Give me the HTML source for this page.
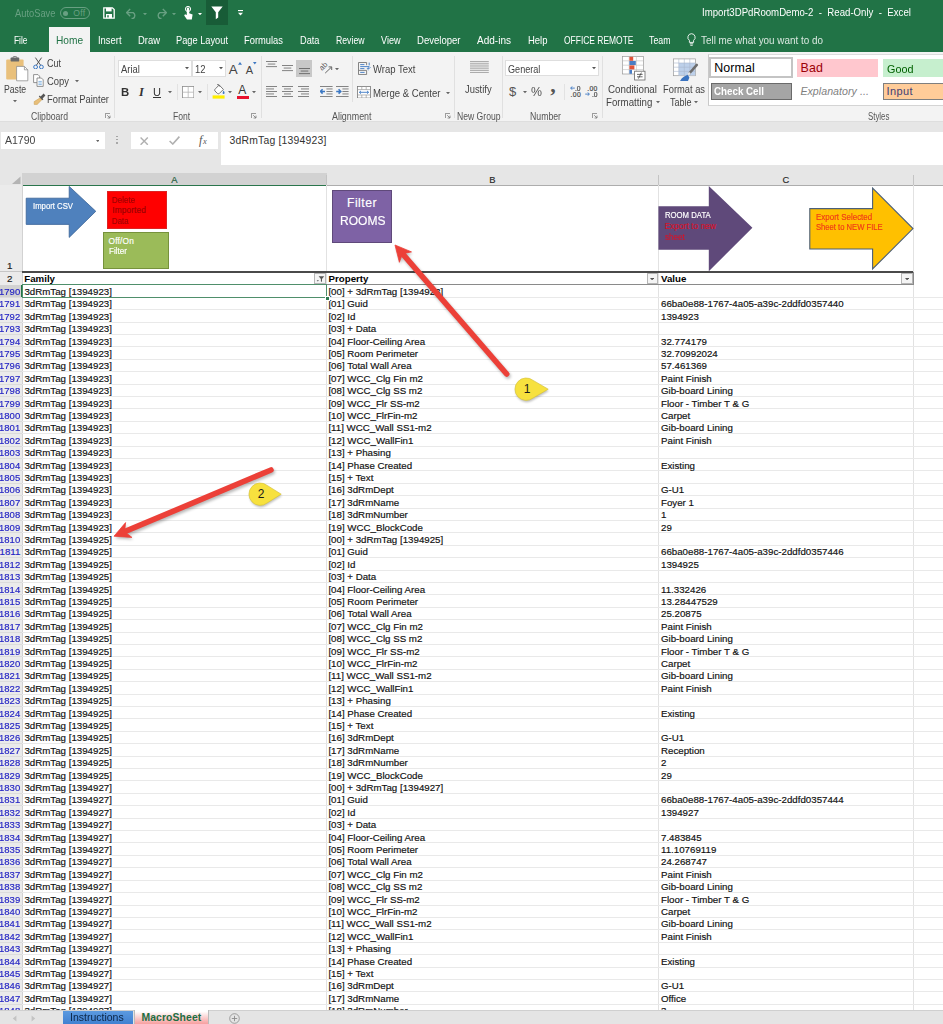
<!DOCTYPE html>
<html><head><meta charset="utf-8"><title>Import3DPdRoomDemo-2 - Read-Only - Excel</title>
<style>
html,body{margin:0;padding:0;}
body{width:943px;height:1024px;overflow:hidden;position:relative;background:#fff;font-family:"Liberation Sans",Arial,sans-serif;}
.t{position:absolute;white-space:pre;display:block;}
.b{position:absolute;display:block;}
.g{-webkit-text-stroke:0.17px currentColor;}
svg text{font-family:"Liberation Sans",Arial,sans-serif;}
</style></head><body>
<div class="b" style="left:0.0px;top:0.0px;width:943.0px;height:52.0px;background:#217346;"></div>
<div class="b" style="left:0.0px;top:52.0px;width:943.0px;height:69.6px;background:#f3f3f3;"></div>
<div class="b" style="left:0.0px;top:121.6px;width:943.0px;height:52.4px;background:#e6e6e6;"></div>
<div class="b" style="left:0.0px;top:121.3px;width:943.0px;height:1.2px;background:#dedede;"></div>
<div class="b" style="left:0.0px;top:174.0px;width:943.0px;height:11.0px;background:#e6e6e6;"></div>
<div class="b" style="left:22.3px;top:173.3px;width:304.3px;height:11.7px;background:#d2d2d2;"></div>
<div class="b" style="left:22.3px;top:184.6px;width:304.3px;height:1.2px;background:#2a754c;"></div>
<div class="b" style="left:326.6px;top:184.8px;width:616.4px;height:0.8px;background:#adadad;"></div>
<div class="b" style="left:326.1px;top:175.0px;width:1.0px;height:10.0px;background:#c4c4c4;"></div>
<div class="b" style="left:658.2px;top:175.0px;width:1.0px;height:10.0px;background:#c4c4c4;"></div>
<div class="b" style="left:912.8px;top:175.0px;width:1.0px;height:10.0px;background:#c4c4c4;"></div>
<span class="t g" style="left:171.2px;top:173.4px;height:13px;line-height:13px;font-size:9.40px;color:#1f5c3a;">A</span>
<span class="t g" style="left:489.3px;top:173.4px;height:13px;line-height:13px;font-size:9.40px;color:#2a2a2a;">B</span>
<span class="t g" style="left:782.6px;top:173.4px;height:13px;line-height:13px;font-size:9.40px;color:#2a2a2a;">C</span>
<svg class="b" style="left:11.0px;top:175.8px;" width="10" height="8.5" viewBox="0 0 10 8.5"><path d="M9.5 0.5V8H1Z" fill="#b4b4b4"/></svg>
<div class="b" style="left:0.0px;top:185.0px;width:22.3px;height:825.2px;background:#ebebeb;"></div>
<div class="b" style="left:21.8px;top:185.0px;width:1.0px;height:825.2px;background:#d2d2d2;"></div>
<div class="b" style="left:326.1px;top:185.4px;width:1.0px;height:824.8px;background:#e2e2e2;"></div>
<div class="b" style="left:658.2px;top:185.4px;width:1.0px;height:824.8px;background:#e2e2e2;"></div>
<div class="b" style="left:912.8px;top:185.4px;width:1.0px;height:824.8px;background:#e2e2e2;"></div>
<span class="t g" style="left:6.9px;top:259.4px;height:14px;line-height:14px;font-size:9.80px;color:#222;">1</span>
<div class="b" style="left:0.0px;top:271.4px;width:22.3px;height:0.8px;background:#c6c6c6;"></div>
<span class="t g" style="left:6.9px;top:271.9px;height:14px;line-height:14px;font-size:9.80px;color:#222;">2</span>
<div class="b" style="left:22.3px;top:271.4px;width:891.0px;height:1.5px;background:#4a4a4a;"></div>
<div class="b" style="left:22.3px;top:284.2px;width:891.0px;height:1.1px;background:#8a8a8a;"></div>
<div class="b" style="left:912.5px;top:272.0px;width:1.2px;height:13.0px;background:#8a8a8a;"></div>
<span class="t " style="left:24.3px;top:271.9px;height:14px;line-height:14px;font-size:9.70px;color:#000;font-weight:bold;">Family</span>
<span class="t " style="left:328.6px;top:271.9px;height:14px;line-height:14px;font-size:9.70px;color:#000;font-weight:bold;">Property</span>
<span class="t " style="left:661.0px;top:271.9px;height:14px;line-height:14px;font-size:9.70px;color:#000;font-weight:bold;">Value</span>
<div class="b" style="left:0.0px;top:284.8px;width:22.3px;height:12.4px;background:#d2d2d2;"></div>
<div class="b" style="left:21.3px;top:284.8px;width:1.5px;height:12.4px;background:#217346;"></div>
<div class="b" style="left:0.0px;top:296.8px;width:22.3px;height:0.8px;background:#dcdcdc;"></div>
<div class="b" style="left:22.3px;top:296.8px;width:920.7px;height:0.8px;background:#e9e9e9;"></div>
<span class="t g" style="left:-0.6px;top:284.9px;height:14px;line-height:14px;font-size:9.72px;color:#2525c4;transform:scaleX(0.9804);transform-origin:0 50%;">1790</span>
<span class="t g" style="left:24.4px;top:284.9px;height:14px;line-height:14px;font-size:9.72px;color:#111;">3dRmTag [1394923]</span>
<span class="t g" style="left:328.4px;top:284.9px;height:14px;line-height:14px;font-size:9.72px;color:#111;">[00] + 3dRmTag [1394923]</span>
<div class="b" style="left:0.0px;top:309.2px;width:22.3px;height:0.8px;background:#dcdcdc;"></div>
<div class="b" style="left:22.3px;top:309.2px;width:920.7px;height:0.8px;background:#e9e9e9;"></div>
<span class="t g" style="left:-0.6px;top:297.3px;height:14px;line-height:14px;font-size:9.72px;color:#2525c4;transform:scaleX(0.9804);transform-origin:0 50%;">1791</span>
<span class="t g" style="left:24.4px;top:297.3px;height:14px;line-height:14px;font-size:9.72px;color:#111;">3dRmTag [1394923]</span>
<span class="t g" style="left:328.4px;top:297.3px;height:14px;line-height:14px;font-size:9.72px;color:#111;">[01] Guid</span>
<span class="t g" style="left:661.0px;top:297.3px;height:14px;line-height:14px;font-size:9.72px;color:#111;">66ba0e88-1767-4a05-a39c-2ddfd0357440</span>
<div class="b" style="left:0.0px;top:321.6px;width:22.3px;height:0.8px;background:#dcdcdc;"></div>
<div class="b" style="left:22.3px;top:321.6px;width:920.7px;height:0.8px;background:#e9e9e9;"></div>
<span class="t g" style="left:-0.6px;top:309.7px;height:14px;line-height:14px;font-size:9.72px;color:#2525c4;transform:scaleX(0.9804);transform-origin:0 50%;">1792</span>
<span class="t g" style="left:24.4px;top:309.7px;height:14px;line-height:14px;font-size:9.72px;color:#111;">3dRmTag [1394923]</span>
<span class="t g" style="left:328.4px;top:309.7px;height:14px;line-height:14px;font-size:9.72px;color:#111;">[02] Id</span>
<span class="t g" style="left:661.0px;top:309.7px;height:14px;line-height:14px;font-size:9.72px;color:#111;">1394923</span>
<div class="b" style="left:0.0px;top:334.0px;width:22.3px;height:0.8px;background:#dcdcdc;"></div>
<div class="b" style="left:22.3px;top:334.0px;width:920.7px;height:0.8px;background:#e9e9e9;"></div>
<span class="t g" style="left:-0.6px;top:322.1px;height:14px;line-height:14px;font-size:9.72px;color:#2525c4;transform:scaleX(0.9804);transform-origin:0 50%;">1793</span>
<span class="t g" style="left:24.4px;top:322.1px;height:14px;line-height:14px;font-size:9.72px;color:#111;">3dRmTag [1394923]</span>
<span class="t g" style="left:328.4px;top:322.1px;height:14px;line-height:14px;font-size:9.72px;color:#111;">[03] + Data</span>
<div class="b" style="left:0.0px;top:346.4px;width:22.3px;height:0.8px;background:#dcdcdc;"></div>
<div class="b" style="left:22.3px;top:346.4px;width:920.7px;height:0.8px;background:#e9e9e9;"></div>
<span class="t g" style="left:-0.6px;top:334.5px;height:14px;line-height:14px;font-size:9.72px;color:#2525c4;transform:scaleX(0.9804);transform-origin:0 50%;">1794</span>
<span class="t g" style="left:24.4px;top:334.5px;height:14px;line-height:14px;font-size:9.72px;color:#111;">3dRmTag [1394923]</span>
<span class="t g" style="left:328.4px;top:334.5px;height:14px;line-height:14px;font-size:9.72px;color:#111;">[04] Floor-Ceiling Area</span>
<span class="t g" style="left:661.0px;top:334.5px;height:14px;line-height:14px;font-size:9.72px;color:#111;">32.774179</span>
<div class="b" style="left:0.0px;top:358.8px;width:22.3px;height:0.8px;background:#dcdcdc;"></div>
<div class="b" style="left:22.3px;top:358.8px;width:920.7px;height:0.8px;background:#e9e9e9;"></div>
<span class="t g" style="left:-0.6px;top:346.9px;height:14px;line-height:14px;font-size:9.72px;color:#2525c4;transform:scaleX(0.9804);transform-origin:0 50%;">1795</span>
<span class="t g" style="left:24.4px;top:346.9px;height:14px;line-height:14px;font-size:9.72px;color:#111;">3dRmTag [1394923]</span>
<span class="t g" style="left:328.4px;top:346.9px;height:14px;line-height:14px;font-size:9.72px;color:#111;">[05] Room Perimeter</span>
<span class="t g" style="left:661.0px;top:346.9px;height:14px;line-height:14px;font-size:9.72px;color:#111;">32.70992024</span>
<div class="b" style="left:0.0px;top:371.2px;width:22.3px;height:0.8px;background:#dcdcdc;"></div>
<div class="b" style="left:22.3px;top:371.2px;width:920.7px;height:0.8px;background:#e9e9e9;"></div>
<span class="t g" style="left:-0.6px;top:359.3px;height:14px;line-height:14px;font-size:9.72px;color:#2525c4;transform:scaleX(0.9804);transform-origin:0 50%;">1796</span>
<span class="t g" style="left:24.4px;top:359.3px;height:14px;line-height:14px;font-size:9.72px;color:#111;">3dRmTag [1394923]</span>
<span class="t g" style="left:328.4px;top:359.3px;height:14px;line-height:14px;font-size:9.72px;color:#111;">[06] Total Wall Area</span>
<span class="t g" style="left:661.0px;top:359.3px;height:14px;line-height:14px;font-size:9.72px;color:#111;">57.461369</span>
<div class="b" style="left:0.0px;top:383.6px;width:22.3px;height:0.8px;background:#dcdcdc;"></div>
<div class="b" style="left:22.3px;top:383.6px;width:920.7px;height:0.8px;background:#e9e9e9;"></div>
<span class="t g" style="left:-0.6px;top:371.7px;height:14px;line-height:14px;font-size:9.72px;color:#2525c4;transform:scaleX(0.9804);transform-origin:0 50%;">1797</span>
<span class="t g" style="left:24.4px;top:371.7px;height:14px;line-height:14px;font-size:9.72px;color:#111;">3dRmTag [1394923]</span>
<span class="t g" style="left:328.4px;top:371.7px;height:14px;line-height:14px;font-size:9.72px;color:#111;">[07] WCC_Clg Fin m2</span>
<span class="t g" style="left:661.0px;top:371.7px;height:14px;line-height:14px;font-size:9.72px;color:#111;">Paint Finish</span>
<div class="b" style="left:0.0px;top:396.0px;width:22.3px;height:0.8px;background:#dcdcdc;"></div>
<div class="b" style="left:22.3px;top:396.0px;width:920.7px;height:0.8px;background:#e9e9e9;"></div>
<span class="t g" style="left:-0.6px;top:384.1px;height:14px;line-height:14px;font-size:9.72px;color:#2525c4;transform:scaleX(0.9804);transform-origin:0 50%;">1798</span>
<span class="t g" style="left:24.4px;top:384.1px;height:14px;line-height:14px;font-size:9.72px;color:#111;">3dRmTag [1394923]</span>
<span class="t g" style="left:328.4px;top:384.1px;height:14px;line-height:14px;font-size:9.72px;color:#111;">[08] WCC_Clg SS m2</span>
<span class="t g" style="left:661.0px;top:384.1px;height:14px;line-height:14px;font-size:9.72px;color:#111;">Gib-board Lining</span>
<div class="b" style="left:0.0px;top:408.4px;width:22.3px;height:0.8px;background:#dcdcdc;"></div>
<div class="b" style="left:22.3px;top:408.4px;width:920.7px;height:0.8px;background:#e9e9e9;"></div>
<span class="t g" style="left:-0.6px;top:396.5px;height:14px;line-height:14px;font-size:9.72px;color:#2525c4;transform:scaleX(0.9804);transform-origin:0 50%;">1799</span>
<span class="t g" style="left:24.4px;top:396.5px;height:14px;line-height:14px;font-size:9.72px;color:#111;">3dRmTag [1394923]</span>
<span class="t g" style="left:328.4px;top:396.5px;height:14px;line-height:14px;font-size:9.72px;color:#111;">[09] WCC_Flr SS-m2</span>
<span class="t g" style="left:661.0px;top:396.5px;height:14px;line-height:14px;font-size:9.72px;color:#111;">Floor - Timber T &amp; G</span>
<div class="b" style="left:0.0px;top:420.8px;width:22.3px;height:0.8px;background:#dcdcdc;"></div>
<div class="b" style="left:22.3px;top:420.8px;width:920.7px;height:0.8px;background:#e9e9e9;"></div>
<span class="t g" style="left:-0.6px;top:408.9px;height:14px;line-height:14px;font-size:9.72px;color:#2525c4;transform:scaleX(0.9804);transform-origin:0 50%;">1800</span>
<span class="t g" style="left:24.4px;top:408.9px;height:14px;line-height:14px;font-size:9.72px;color:#111;">3dRmTag [1394923]</span>
<span class="t g" style="left:328.4px;top:408.9px;height:14px;line-height:14px;font-size:9.72px;color:#111;">[10] WCC_FlrFin-m2</span>
<span class="t g" style="left:661.0px;top:408.9px;height:14px;line-height:14px;font-size:9.72px;color:#111;">Carpet</span>
<div class="b" style="left:0.0px;top:433.2px;width:22.3px;height:0.8px;background:#dcdcdc;"></div>
<div class="b" style="left:22.3px;top:433.2px;width:920.7px;height:0.8px;background:#e9e9e9;"></div>
<span class="t g" style="left:-0.6px;top:421.3px;height:14px;line-height:14px;font-size:9.72px;color:#2525c4;transform:scaleX(0.9804);transform-origin:0 50%;">1801</span>
<span class="t g" style="left:24.4px;top:421.3px;height:14px;line-height:14px;font-size:9.72px;color:#111;">3dRmTag [1394923]</span>
<span class="t g" style="left:328.4px;top:421.3px;height:14px;line-height:14px;font-size:9.72px;color:#111;">[11] WCC_Wall SS1-m2</span>
<span class="t g" style="left:661.0px;top:421.3px;height:14px;line-height:14px;font-size:9.72px;color:#111;">Gib-board Lining</span>
<div class="b" style="left:0.0px;top:445.6px;width:22.3px;height:0.8px;background:#dcdcdc;"></div>
<div class="b" style="left:22.3px;top:445.6px;width:920.7px;height:0.8px;background:#e9e9e9;"></div>
<span class="t g" style="left:-0.6px;top:433.7px;height:14px;line-height:14px;font-size:9.72px;color:#2525c4;transform:scaleX(0.9804);transform-origin:0 50%;">1802</span>
<span class="t g" style="left:24.4px;top:433.7px;height:14px;line-height:14px;font-size:9.72px;color:#111;">3dRmTag [1394923]</span>
<span class="t g" style="left:328.4px;top:433.7px;height:14px;line-height:14px;font-size:9.72px;color:#111;">[12] WCC_WallFin1</span>
<span class="t g" style="left:661.0px;top:433.7px;height:14px;line-height:14px;font-size:9.72px;color:#111;">Paint Finish</span>
<div class="b" style="left:0.0px;top:458.0px;width:22.3px;height:0.8px;background:#dcdcdc;"></div>
<div class="b" style="left:22.3px;top:458.0px;width:920.7px;height:0.8px;background:#e9e9e9;"></div>
<span class="t g" style="left:-0.6px;top:446.1px;height:14px;line-height:14px;font-size:9.72px;color:#2525c4;transform:scaleX(0.9804);transform-origin:0 50%;">1803</span>
<span class="t g" style="left:24.4px;top:446.1px;height:14px;line-height:14px;font-size:9.72px;color:#111;">3dRmTag [1394923]</span>
<span class="t g" style="left:328.4px;top:446.1px;height:14px;line-height:14px;font-size:9.72px;color:#111;">[13] + Phasing</span>
<div class="b" style="left:0.0px;top:470.4px;width:22.3px;height:0.8px;background:#dcdcdc;"></div>
<div class="b" style="left:22.3px;top:470.4px;width:920.7px;height:0.8px;background:#e9e9e9;"></div>
<span class="t g" style="left:-0.6px;top:458.5px;height:14px;line-height:14px;font-size:9.72px;color:#2525c4;transform:scaleX(0.9804);transform-origin:0 50%;">1804</span>
<span class="t g" style="left:24.4px;top:458.5px;height:14px;line-height:14px;font-size:9.72px;color:#111;">3dRmTag [1394923]</span>
<span class="t g" style="left:328.4px;top:458.5px;height:14px;line-height:14px;font-size:9.72px;color:#111;">[14] Phase Created</span>
<span class="t g" style="left:661.0px;top:458.5px;height:14px;line-height:14px;font-size:9.72px;color:#111;">Existing</span>
<div class="b" style="left:0.0px;top:482.8px;width:22.3px;height:0.8px;background:#dcdcdc;"></div>
<div class="b" style="left:22.3px;top:482.8px;width:920.7px;height:0.8px;background:#e9e9e9;"></div>
<span class="t g" style="left:-0.6px;top:470.9px;height:14px;line-height:14px;font-size:9.72px;color:#2525c4;transform:scaleX(0.9804);transform-origin:0 50%;">1805</span>
<span class="t g" style="left:24.4px;top:470.9px;height:14px;line-height:14px;font-size:9.72px;color:#111;">3dRmTag [1394923]</span>
<span class="t g" style="left:328.4px;top:470.9px;height:14px;line-height:14px;font-size:9.72px;color:#111;">[15] + Text</span>
<div class="b" style="left:0.0px;top:495.2px;width:22.3px;height:0.8px;background:#dcdcdc;"></div>
<div class="b" style="left:22.3px;top:495.2px;width:920.7px;height:0.8px;background:#e9e9e9;"></div>
<span class="t g" style="left:-0.6px;top:483.3px;height:14px;line-height:14px;font-size:9.72px;color:#2525c4;transform:scaleX(0.9804);transform-origin:0 50%;">1806</span>
<span class="t g" style="left:24.4px;top:483.3px;height:14px;line-height:14px;font-size:9.72px;color:#111;">3dRmTag [1394923]</span>
<span class="t g" style="left:328.4px;top:483.3px;height:14px;line-height:14px;font-size:9.72px;color:#111;">[16] 3dRmDept</span>
<span class="t g" style="left:661.0px;top:483.3px;height:14px;line-height:14px;font-size:9.72px;color:#111;">G-U1</span>
<div class="b" style="left:0.0px;top:507.6px;width:22.3px;height:0.8px;background:#dcdcdc;"></div>
<div class="b" style="left:22.3px;top:507.6px;width:920.7px;height:0.8px;background:#e9e9e9;"></div>
<span class="t g" style="left:-0.6px;top:495.7px;height:14px;line-height:14px;font-size:9.72px;color:#2525c4;transform:scaleX(0.9804);transform-origin:0 50%;">1807</span>
<span class="t g" style="left:24.4px;top:495.7px;height:14px;line-height:14px;font-size:9.72px;color:#111;">3dRmTag [1394923]</span>
<span class="t g" style="left:328.4px;top:495.7px;height:14px;line-height:14px;font-size:9.72px;color:#111;">[17] 3dRmName</span>
<span class="t g" style="left:661.0px;top:495.7px;height:14px;line-height:14px;font-size:9.72px;color:#111;">Foyer 1</span>
<div class="b" style="left:0.0px;top:520.0px;width:22.3px;height:0.8px;background:#dcdcdc;"></div>
<div class="b" style="left:22.3px;top:520.0px;width:920.7px;height:0.8px;background:#e9e9e9;"></div>
<span class="t g" style="left:-0.6px;top:508.1px;height:14px;line-height:14px;font-size:9.72px;color:#2525c4;transform:scaleX(0.9804);transform-origin:0 50%;">1808</span>
<span class="t g" style="left:24.4px;top:508.1px;height:14px;line-height:14px;font-size:9.72px;color:#111;">3dRmTag [1394923]</span>
<span class="t g" style="left:328.4px;top:508.1px;height:14px;line-height:14px;font-size:9.72px;color:#111;">[18] 3dRmNumber</span>
<span class="t g" style="left:661.0px;top:508.1px;height:14px;line-height:14px;font-size:9.72px;color:#111;">1</span>
<div class="b" style="left:0.0px;top:532.4px;width:22.3px;height:0.8px;background:#dcdcdc;"></div>
<div class="b" style="left:22.3px;top:532.4px;width:920.7px;height:0.8px;background:#e9e9e9;"></div>
<span class="t g" style="left:-0.6px;top:520.5px;height:14px;line-height:14px;font-size:9.72px;color:#2525c4;transform:scaleX(0.9804);transform-origin:0 50%;">1809</span>
<span class="t g" style="left:24.4px;top:520.5px;height:14px;line-height:14px;font-size:9.72px;color:#111;">3dRmTag [1394923]</span>
<span class="t g" style="left:328.4px;top:520.5px;height:14px;line-height:14px;font-size:9.72px;color:#111;">[19] WCC_BlockCode</span>
<span class="t g" style="left:661.0px;top:520.5px;height:14px;line-height:14px;font-size:9.72px;color:#111;">29</span>
<div class="b" style="left:0.0px;top:544.8px;width:22.3px;height:0.8px;background:#dcdcdc;"></div>
<div class="b" style="left:22.3px;top:544.8px;width:920.7px;height:0.8px;background:#e9e9e9;"></div>
<span class="t g" style="left:-0.6px;top:532.9px;height:14px;line-height:14px;font-size:9.72px;color:#2525c4;transform:scaleX(0.9804);transform-origin:0 50%;">1810</span>
<span class="t g" style="left:24.4px;top:532.9px;height:14px;line-height:14px;font-size:9.72px;color:#111;">3dRmTag [1394925]</span>
<span class="t g" style="left:328.4px;top:532.9px;height:14px;line-height:14px;font-size:9.72px;color:#111;">[00] + 3dRmTag [1394925]</span>
<div class="b" style="left:0.0px;top:557.2px;width:22.3px;height:0.8px;background:#dcdcdc;"></div>
<div class="b" style="left:22.3px;top:557.2px;width:920.7px;height:0.8px;background:#e9e9e9;"></div>
<span class="t g" style="left:-0.6px;top:545.3px;height:14px;line-height:14px;font-size:9.72px;color:#2525c4;letter-spacing:0.074px;">1811</span>
<span class="t g" style="left:24.4px;top:545.3px;height:14px;line-height:14px;font-size:9.72px;color:#111;">3dRmTag [1394925]</span>
<span class="t g" style="left:328.4px;top:545.3px;height:14px;line-height:14px;font-size:9.72px;color:#111;">[01] Guid</span>
<span class="t g" style="left:661.0px;top:545.3px;height:14px;line-height:14px;font-size:9.72px;color:#111;">66ba0e88-1767-4a05-a39c-2ddfd0357446</span>
<div class="b" style="left:0.0px;top:569.6px;width:22.3px;height:0.8px;background:#dcdcdc;"></div>
<div class="b" style="left:22.3px;top:569.6px;width:920.7px;height:0.8px;background:#e9e9e9;"></div>
<span class="t g" style="left:-0.6px;top:557.7px;height:14px;line-height:14px;font-size:9.72px;color:#2525c4;transform:scaleX(0.9804);transform-origin:0 50%;">1812</span>
<span class="t g" style="left:24.4px;top:557.7px;height:14px;line-height:14px;font-size:9.72px;color:#111;">3dRmTag [1394925]</span>
<span class="t g" style="left:328.4px;top:557.7px;height:14px;line-height:14px;font-size:9.72px;color:#111;">[02] Id</span>
<span class="t g" style="left:661.0px;top:557.7px;height:14px;line-height:14px;font-size:9.72px;color:#111;">1394925</span>
<div class="b" style="left:0.0px;top:582.0px;width:22.3px;height:0.8px;background:#dcdcdc;"></div>
<div class="b" style="left:22.3px;top:582.0px;width:920.7px;height:0.8px;background:#e9e9e9;"></div>
<span class="t g" style="left:-0.6px;top:570.1px;height:14px;line-height:14px;font-size:9.72px;color:#2525c4;transform:scaleX(0.9804);transform-origin:0 50%;">1813</span>
<span class="t g" style="left:24.4px;top:570.1px;height:14px;line-height:14px;font-size:9.72px;color:#111;">3dRmTag [1394925]</span>
<span class="t g" style="left:328.4px;top:570.1px;height:14px;line-height:14px;font-size:9.72px;color:#111;">[03] + Data</span>
<div class="b" style="left:0.0px;top:594.4px;width:22.3px;height:0.8px;background:#dcdcdc;"></div>
<div class="b" style="left:22.3px;top:594.4px;width:920.7px;height:0.8px;background:#e9e9e9;"></div>
<span class="t g" style="left:-0.6px;top:582.5px;height:14px;line-height:14px;font-size:9.72px;color:#2525c4;transform:scaleX(0.9804);transform-origin:0 50%;">1814</span>
<span class="t g" style="left:24.4px;top:582.5px;height:14px;line-height:14px;font-size:9.72px;color:#111;">3dRmTag [1394925]</span>
<span class="t g" style="left:328.4px;top:582.5px;height:14px;line-height:14px;font-size:9.72px;color:#111;">[04] Floor-Ceiling Area</span>
<span class="t g" style="left:661.0px;top:582.5px;height:14px;line-height:14px;font-size:9.72px;color:#111;">11.332426</span>
<div class="b" style="left:0.0px;top:606.8px;width:22.3px;height:0.8px;background:#dcdcdc;"></div>
<div class="b" style="left:22.3px;top:606.8px;width:920.7px;height:0.8px;background:#e9e9e9;"></div>
<span class="t g" style="left:-0.6px;top:594.9px;height:14px;line-height:14px;font-size:9.72px;color:#2525c4;transform:scaleX(0.9804);transform-origin:0 50%;">1815</span>
<span class="t g" style="left:24.4px;top:594.9px;height:14px;line-height:14px;font-size:9.72px;color:#111;">3dRmTag [1394925]</span>
<span class="t g" style="left:328.4px;top:594.9px;height:14px;line-height:14px;font-size:9.72px;color:#111;">[05] Room Perimeter</span>
<span class="t g" style="left:661.0px;top:594.9px;height:14px;line-height:14px;font-size:9.72px;color:#111;">13.28447529</span>
<div class="b" style="left:0.0px;top:619.2px;width:22.3px;height:0.8px;background:#dcdcdc;"></div>
<div class="b" style="left:22.3px;top:619.2px;width:920.7px;height:0.8px;background:#e9e9e9;"></div>
<span class="t g" style="left:-0.6px;top:607.3px;height:14px;line-height:14px;font-size:9.72px;color:#2525c4;transform:scaleX(0.9804);transform-origin:0 50%;">1816</span>
<span class="t g" style="left:24.4px;top:607.3px;height:14px;line-height:14px;font-size:9.72px;color:#111;">3dRmTag [1394925]</span>
<span class="t g" style="left:328.4px;top:607.3px;height:14px;line-height:14px;font-size:9.72px;color:#111;">[06] Total Wall Area</span>
<span class="t g" style="left:661.0px;top:607.3px;height:14px;line-height:14px;font-size:9.72px;color:#111;">25.20875</span>
<div class="b" style="left:0.0px;top:631.6px;width:22.3px;height:0.8px;background:#dcdcdc;"></div>
<div class="b" style="left:22.3px;top:631.6px;width:920.7px;height:0.8px;background:#e9e9e9;"></div>
<span class="t g" style="left:-0.6px;top:619.7px;height:14px;line-height:14px;font-size:9.72px;color:#2525c4;transform:scaleX(0.9804);transform-origin:0 50%;">1817</span>
<span class="t g" style="left:24.4px;top:619.7px;height:14px;line-height:14px;font-size:9.72px;color:#111;">3dRmTag [1394925]</span>
<span class="t g" style="left:328.4px;top:619.7px;height:14px;line-height:14px;font-size:9.72px;color:#111;">[07] WCC_Clg Fin m2</span>
<span class="t g" style="left:661.0px;top:619.7px;height:14px;line-height:14px;font-size:9.72px;color:#111;">Paint Finish</span>
<div class="b" style="left:0.0px;top:644.0px;width:22.3px;height:0.8px;background:#dcdcdc;"></div>
<div class="b" style="left:22.3px;top:644.0px;width:920.7px;height:0.8px;background:#e9e9e9;"></div>
<span class="t g" style="left:-0.6px;top:632.1px;height:14px;line-height:14px;font-size:9.72px;color:#2525c4;transform:scaleX(0.9804);transform-origin:0 50%;">1818</span>
<span class="t g" style="left:24.4px;top:632.1px;height:14px;line-height:14px;font-size:9.72px;color:#111;">3dRmTag [1394925]</span>
<span class="t g" style="left:328.4px;top:632.1px;height:14px;line-height:14px;font-size:9.72px;color:#111;">[08] WCC_Clg SS m2</span>
<span class="t g" style="left:661.0px;top:632.1px;height:14px;line-height:14px;font-size:9.72px;color:#111;">Gib-board Lining</span>
<div class="b" style="left:0.0px;top:656.4px;width:22.3px;height:0.8px;background:#dcdcdc;"></div>
<div class="b" style="left:22.3px;top:656.4px;width:920.7px;height:0.8px;background:#e9e9e9;"></div>
<span class="t g" style="left:-0.6px;top:644.5px;height:14px;line-height:14px;font-size:9.72px;color:#2525c4;transform:scaleX(0.9804);transform-origin:0 50%;">1819</span>
<span class="t g" style="left:24.4px;top:644.5px;height:14px;line-height:14px;font-size:9.72px;color:#111;">3dRmTag [1394925]</span>
<span class="t g" style="left:328.4px;top:644.5px;height:14px;line-height:14px;font-size:9.72px;color:#111;">[09] WCC_Flr SS-m2</span>
<span class="t g" style="left:661.0px;top:644.5px;height:14px;line-height:14px;font-size:9.72px;color:#111;">Floor - Timber T &amp; G</span>
<div class="b" style="left:0.0px;top:668.8px;width:22.3px;height:0.8px;background:#dcdcdc;"></div>
<div class="b" style="left:22.3px;top:668.8px;width:920.7px;height:0.8px;background:#e9e9e9;"></div>
<span class="t g" style="left:-0.6px;top:656.9px;height:14px;line-height:14px;font-size:9.72px;color:#2525c4;transform:scaleX(0.9804);transform-origin:0 50%;">1820</span>
<span class="t g" style="left:24.4px;top:656.9px;height:14px;line-height:14px;font-size:9.72px;color:#111;">3dRmTag [1394925]</span>
<span class="t g" style="left:328.4px;top:656.9px;height:14px;line-height:14px;font-size:9.72px;color:#111;">[10] WCC_FlrFin-m2</span>
<span class="t g" style="left:661.0px;top:656.9px;height:14px;line-height:14px;font-size:9.72px;color:#111;">Carpet</span>
<div class="b" style="left:0.0px;top:681.2px;width:22.3px;height:0.8px;background:#dcdcdc;"></div>
<div class="b" style="left:22.3px;top:681.2px;width:920.7px;height:0.8px;background:#e9e9e9;"></div>
<span class="t g" style="left:-0.6px;top:669.3px;height:14px;line-height:14px;font-size:9.72px;color:#2525c4;transform:scaleX(0.9804);transform-origin:0 50%;">1821</span>
<span class="t g" style="left:24.4px;top:669.3px;height:14px;line-height:14px;font-size:9.72px;color:#111;">3dRmTag [1394925]</span>
<span class="t g" style="left:328.4px;top:669.3px;height:14px;line-height:14px;font-size:9.72px;color:#111;">[11] WCC_Wall SS1-m2</span>
<span class="t g" style="left:661.0px;top:669.3px;height:14px;line-height:14px;font-size:9.72px;color:#111;">Gib-board Lining</span>
<div class="b" style="left:0.0px;top:693.6px;width:22.3px;height:0.8px;background:#dcdcdc;"></div>
<div class="b" style="left:22.3px;top:693.6px;width:920.7px;height:0.8px;background:#e9e9e9;"></div>
<span class="t g" style="left:-0.6px;top:681.7px;height:14px;line-height:14px;font-size:9.72px;color:#2525c4;transform:scaleX(0.9804);transform-origin:0 50%;">1822</span>
<span class="t g" style="left:24.4px;top:681.7px;height:14px;line-height:14px;font-size:9.72px;color:#111;">3dRmTag [1394925]</span>
<span class="t g" style="left:328.4px;top:681.7px;height:14px;line-height:14px;font-size:9.72px;color:#111;">[12] WCC_WallFin1</span>
<span class="t g" style="left:661.0px;top:681.7px;height:14px;line-height:14px;font-size:9.72px;color:#111;">Paint Finish</span>
<div class="b" style="left:0.0px;top:706.0px;width:22.3px;height:0.8px;background:#dcdcdc;"></div>
<div class="b" style="left:22.3px;top:706.0px;width:920.7px;height:0.8px;background:#e9e9e9;"></div>
<span class="t g" style="left:-0.6px;top:694.1px;height:14px;line-height:14px;font-size:9.72px;color:#2525c4;transform:scaleX(0.9804);transform-origin:0 50%;">1823</span>
<span class="t g" style="left:24.4px;top:694.1px;height:14px;line-height:14px;font-size:9.72px;color:#111;">3dRmTag [1394925]</span>
<span class="t g" style="left:328.4px;top:694.1px;height:14px;line-height:14px;font-size:9.72px;color:#111;">[13] + Phasing</span>
<div class="b" style="left:0.0px;top:718.4px;width:22.3px;height:0.8px;background:#dcdcdc;"></div>
<div class="b" style="left:22.3px;top:718.4px;width:920.7px;height:0.8px;background:#e9e9e9;"></div>
<span class="t g" style="left:-0.6px;top:706.5px;height:14px;line-height:14px;font-size:9.72px;color:#2525c4;transform:scaleX(0.9804);transform-origin:0 50%;">1824</span>
<span class="t g" style="left:24.4px;top:706.5px;height:14px;line-height:14px;font-size:9.72px;color:#111;">3dRmTag [1394925]</span>
<span class="t g" style="left:328.4px;top:706.5px;height:14px;line-height:14px;font-size:9.72px;color:#111;">[14] Phase Created</span>
<span class="t g" style="left:661.0px;top:706.5px;height:14px;line-height:14px;font-size:9.72px;color:#111;">Existing</span>
<div class="b" style="left:0.0px;top:730.8px;width:22.3px;height:0.8px;background:#dcdcdc;"></div>
<div class="b" style="left:22.3px;top:730.8px;width:920.7px;height:0.8px;background:#e9e9e9;"></div>
<span class="t g" style="left:-0.6px;top:718.9px;height:14px;line-height:14px;font-size:9.72px;color:#2525c4;transform:scaleX(0.9804);transform-origin:0 50%;">1825</span>
<span class="t g" style="left:24.4px;top:718.9px;height:14px;line-height:14px;font-size:9.72px;color:#111;">3dRmTag [1394925]</span>
<span class="t g" style="left:328.4px;top:718.9px;height:14px;line-height:14px;font-size:9.72px;color:#111;">[15] + Text</span>
<div class="b" style="left:0.0px;top:743.2px;width:22.3px;height:0.8px;background:#dcdcdc;"></div>
<div class="b" style="left:22.3px;top:743.2px;width:920.7px;height:0.8px;background:#e9e9e9;"></div>
<span class="t g" style="left:-0.6px;top:731.3px;height:14px;line-height:14px;font-size:9.72px;color:#2525c4;transform:scaleX(0.9804);transform-origin:0 50%;">1826</span>
<span class="t g" style="left:24.4px;top:731.3px;height:14px;line-height:14px;font-size:9.72px;color:#111;">3dRmTag [1394925]</span>
<span class="t g" style="left:328.4px;top:731.3px;height:14px;line-height:14px;font-size:9.72px;color:#111;">[16] 3dRmDept</span>
<span class="t g" style="left:661.0px;top:731.3px;height:14px;line-height:14px;font-size:9.72px;color:#111;">G-U1</span>
<div class="b" style="left:0.0px;top:755.6px;width:22.3px;height:0.8px;background:#dcdcdc;"></div>
<div class="b" style="left:22.3px;top:755.6px;width:920.7px;height:0.8px;background:#e9e9e9;"></div>
<span class="t g" style="left:-0.6px;top:743.7px;height:14px;line-height:14px;font-size:9.72px;color:#2525c4;transform:scaleX(0.9804);transform-origin:0 50%;">1827</span>
<span class="t g" style="left:24.4px;top:743.7px;height:14px;line-height:14px;font-size:9.72px;color:#111;">3dRmTag [1394925]</span>
<span class="t g" style="left:328.4px;top:743.7px;height:14px;line-height:14px;font-size:9.72px;color:#111;">[17] 3dRmName</span>
<span class="t g" style="left:661.0px;top:743.7px;height:14px;line-height:14px;font-size:9.72px;color:#111;">Reception</span>
<div class="b" style="left:0.0px;top:768.0px;width:22.3px;height:0.8px;background:#dcdcdc;"></div>
<div class="b" style="left:22.3px;top:768.0px;width:920.7px;height:0.8px;background:#e9e9e9;"></div>
<span class="t g" style="left:-0.6px;top:756.1px;height:14px;line-height:14px;font-size:9.72px;color:#2525c4;transform:scaleX(0.9804);transform-origin:0 50%;">1828</span>
<span class="t g" style="left:24.4px;top:756.1px;height:14px;line-height:14px;font-size:9.72px;color:#111;">3dRmTag [1394925]</span>
<span class="t g" style="left:328.4px;top:756.1px;height:14px;line-height:14px;font-size:9.72px;color:#111;">[18] 3dRmNumber</span>
<span class="t g" style="left:661.0px;top:756.1px;height:14px;line-height:14px;font-size:9.72px;color:#111;">2</span>
<div class="b" style="left:0.0px;top:780.4px;width:22.3px;height:0.8px;background:#dcdcdc;"></div>
<div class="b" style="left:22.3px;top:780.4px;width:920.7px;height:0.8px;background:#e9e9e9;"></div>
<span class="t g" style="left:-0.6px;top:768.5px;height:14px;line-height:14px;font-size:9.72px;color:#2525c4;transform:scaleX(0.9804);transform-origin:0 50%;">1829</span>
<span class="t g" style="left:24.4px;top:768.5px;height:14px;line-height:14px;font-size:9.72px;color:#111;">3dRmTag [1394925]</span>
<span class="t g" style="left:328.4px;top:768.5px;height:14px;line-height:14px;font-size:9.72px;color:#111;">[19] WCC_BlockCode</span>
<span class="t g" style="left:661.0px;top:768.5px;height:14px;line-height:14px;font-size:9.72px;color:#111;">29</span>
<div class="b" style="left:0.0px;top:792.8px;width:22.3px;height:0.8px;background:#dcdcdc;"></div>
<div class="b" style="left:22.3px;top:792.8px;width:920.7px;height:0.8px;background:#e9e9e9;"></div>
<span class="t g" style="left:-0.6px;top:780.9px;height:14px;line-height:14px;font-size:9.72px;color:#2525c4;transform:scaleX(0.9804);transform-origin:0 50%;">1830</span>
<span class="t g" style="left:24.4px;top:780.9px;height:14px;line-height:14px;font-size:9.72px;color:#111;">3dRmTag [1394927]</span>
<span class="t g" style="left:328.4px;top:780.9px;height:14px;line-height:14px;font-size:9.72px;color:#111;">[00] + 3dRmTag [1394927]</span>
<div class="b" style="left:0.0px;top:805.2px;width:22.3px;height:0.8px;background:#dcdcdc;"></div>
<div class="b" style="left:22.3px;top:805.2px;width:920.7px;height:0.8px;background:#e9e9e9;"></div>
<span class="t g" style="left:-0.6px;top:793.3px;height:14px;line-height:14px;font-size:9.72px;color:#2525c4;transform:scaleX(0.9804);transform-origin:0 50%;">1831</span>
<span class="t g" style="left:24.4px;top:793.3px;height:14px;line-height:14px;font-size:9.72px;color:#111;">3dRmTag [1394927]</span>
<span class="t g" style="left:328.4px;top:793.3px;height:14px;line-height:14px;font-size:9.72px;color:#111;">[01] Guid</span>
<span class="t g" style="left:661.0px;top:793.3px;height:14px;line-height:14px;font-size:9.72px;color:#111;">66ba0e88-1767-4a05-a39c-2ddfd0357444</span>
<div class="b" style="left:0.0px;top:817.6px;width:22.3px;height:0.8px;background:#dcdcdc;"></div>
<div class="b" style="left:22.3px;top:817.6px;width:920.7px;height:0.8px;background:#e9e9e9;"></div>
<span class="t g" style="left:-0.6px;top:805.7px;height:14px;line-height:14px;font-size:9.72px;color:#2525c4;transform:scaleX(0.9804);transform-origin:0 50%;">1832</span>
<span class="t g" style="left:24.4px;top:805.7px;height:14px;line-height:14px;font-size:9.72px;color:#111;">3dRmTag [1394927]</span>
<span class="t g" style="left:328.4px;top:805.7px;height:14px;line-height:14px;font-size:9.72px;color:#111;">[02] Id</span>
<span class="t g" style="left:661.0px;top:805.7px;height:14px;line-height:14px;font-size:9.72px;color:#111;">1394927</span>
<div class="b" style="left:0.0px;top:830.0px;width:22.3px;height:0.8px;background:#dcdcdc;"></div>
<div class="b" style="left:22.3px;top:830.0px;width:920.7px;height:0.8px;background:#e9e9e9;"></div>
<span class="t g" style="left:-0.6px;top:818.1px;height:14px;line-height:14px;font-size:9.72px;color:#2525c4;transform:scaleX(0.9804);transform-origin:0 50%;">1833</span>
<span class="t g" style="left:24.4px;top:818.1px;height:14px;line-height:14px;font-size:9.72px;color:#111;">3dRmTag [1394927]</span>
<span class="t g" style="left:328.4px;top:818.1px;height:14px;line-height:14px;font-size:9.72px;color:#111;">[03] + Data</span>
<div class="b" style="left:0.0px;top:842.4px;width:22.3px;height:0.8px;background:#dcdcdc;"></div>
<div class="b" style="left:22.3px;top:842.4px;width:920.7px;height:0.8px;background:#e9e9e9;"></div>
<span class="t g" style="left:-0.6px;top:830.5px;height:14px;line-height:14px;font-size:9.72px;color:#2525c4;transform:scaleX(0.9804);transform-origin:0 50%;">1834</span>
<span class="t g" style="left:24.4px;top:830.5px;height:14px;line-height:14px;font-size:9.72px;color:#111;">3dRmTag [1394927]</span>
<span class="t g" style="left:328.4px;top:830.5px;height:14px;line-height:14px;font-size:9.72px;color:#111;">[04] Floor-Ceiling Area</span>
<span class="t g" style="left:661.0px;top:830.5px;height:14px;line-height:14px;font-size:9.72px;color:#111;">7.483845</span>
<div class="b" style="left:0.0px;top:854.8px;width:22.3px;height:0.8px;background:#dcdcdc;"></div>
<div class="b" style="left:22.3px;top:854.8px;width:920.7px;height:0.8px;background:#e9e9e9;"></div>
<span class="t g" style="left:-0.6px;top:842.9px;height:14px;line-height:14px;font-size:9.72px;color:#2525c4;transform:scaleX(0.9804);transform-origin:0 50%;">1835</span>
<span class="t g" style="left:24.4px;top:842.9px;height:14px;line-height:14px;font-size:9.72px;color:#111;">3dRmTag [1394927]</span>
<span class="t g" style="left:328.4px;top:842.9px;height:14px;line-height:14px;font-size:9.72px;color:#111;">[05] Room Perimeter</span>
<span class="t g" style="left:661.0px;top:842.9px;height:14px;line-height:14px;font-size:9.72px;color:#111;">11.10769119</span>
<div class="b" style="left:0.0px;top:867.2px;width:22.3px;height:0.8px;background:#dcdcdc;"></div>
<div class="b" style="left:22.3px;top:867.2px;width:920.7px;height:0.8px;background:#e9e9e9;"></div>
<span class="t g" style="left:-0.6px;top:855.3px;height:14px;line-height:14px;font-size:9.72px;color:#2525c4;transform:scaleX(0.9804);transform-origin:0 50%;">1836</span>
<span class="t g" style="left:24.4px;top:855.3px;height:14px;line-height:14px;font-size:9.72px;color:#111;">3dRmTag [1394927]</span>
<span class="t g" style="left:328.4px;top:855.3px;height:14px;line-height:14px;font-size:9.72px;color:#111;">[06] Total Wall Area</span>
<span class="t g" style="left:661.0px;top:855.3px;height:14px;line-height:14px;font-size:9.72px;color:#111;">24.268747</span>
<div class="b" style="left:0.0px;top:879.6px;width:22.3px;height:0.8px;background:#dcdcdc;"></div>
<div class="b" style="left:22.3px;top:879.6px;width:920.7px;height:0.8px;background:#e9e9e9;"></div>
<span class="t g" style="left:-0.6px;top:867.7px;height:14px;line-height:14px;font-size:9.72px;color:#2525c4;transform:scaleX(0.9804);transform-origin:0 50%;">1837</span>
<span class="t g" style="left:24.4px;top:867.7px;height:14px;line-height:14px;font-size:9.72px;color:#111;">3dRmTag [1394927]</span>
<span class="t g" style="left:328.4px;top:867.7px;height:14px;line-height:14px;font-size:9.72px;color:#111;">[07] WCC_Clg Fin m2</span>
<span class="t g" style="left:661.0px;top:867.7px;height:14px;line-height:14px;font-size:9.72px;color:#111;">Paint Finish</span>
<div class="b" style="left:0.0px;top:892.0px;width:22.3px;height:0.8px;background:#dcdcdc;"></div>
<div class="b" style="left:22.3px;top:892.0px;width:920.7px;height:0.8px;background:#e9e9e9;"></div>
<span class="t g" style="left:-0.6px;top:880.1px;height:14px;line-height:14px;font-size:9.72px;color:#2525c4;transform:scaleX(0.9804);transform-origin:0 50%;">1838</span>
<span class="t g" style="left:24.4px;top:880.1px;height:14px;line-height:14px;font-size:9.72px;color:#111;">3dRmTag [1394927]</span>
<span class="t g" style="left:328.4px;top:880.1px;height:14px;line-height:14px;font-size:9.72px;color:#111;">[08] WCC_Clg SS m2</span>
<span class="t g" style="left:661.0px;top:880.1px;height:14px;line-height:14px;font-size:9.72px;color:#111;">Gib-board Lining</span>
<div class="b" style="left:0.0px;top:904.5px;width:22.3px;height:0.8px;background:#dcdcdc;"></div>
<div class="b" style="left:22.3px;top:904.5px;width:920.7px;height:0.8px;background:#e9e9e9;"></div>
<span class="t g" style="left:-0.6px;top:892.5px;height:14px;line-height:14px;font-size:9.72px;color:#2525c4;transform:scaleX(0.9804);transform-origin:0 50%;">1839</span>
<span class="t g" style="left:24.4px;top:892.5px;height:14px;line-height:14px;font-size:9.72px;color:#111;">3dRmTag [1394927]</span>
<span class="t g" style="left:328.4px;top:892.5px;height:14px;line-height:14px;font-size:9.72px;color:#111;">[09] WCC_Flr SS-m2</span>
<span class="t g" style="left:661.0px;top:892.5px;height:14px;line-height:14px;font-size:9.72px;color:#111;">Floor - Timber T &amp; G</span>
<div class="b" style="left:0.0px;top:916.9px;width:22.3px;height:0.8px;background:#dcdcdc;"></div>
<div class="b" style="left:22.3px;top:916.9px;width:920.7px;height:0.8px;background:#e9e9e9;"></div>
<span class="t g" style="left:-0.6px;top:905.0px;height:14px;line-height:14px;font-size:9.72px;color:#2525c4;transform:scaleX(0.9804);transform-origin:0 50%;">1840</span>
<span class="t g" style="left:24.4px;top:905.0px;height:14px;line-height:14px;font-size:9.72px;color:#111;">3dRmTag [1394927]</span>
<span class="t g" style="left:328.4px;top:905.0px;height:14px;line-height:14px;font-size:9.72px;color:#111;">[10] WCC_FlrFin-m2</span>
<span class="t g" style="left:661.0px;top:905.0px;height:14px;line-height:14px;font-size:9.72px;color:#111;">Carpet</span>
<div class="b" style="left:0.0px;top:929.3px;width:22.3px;height:0.8px;background:#dcdcdc;"></div>
<div class="b" style="left:22.3px;top:929.3px;width:920.7px;height:0.8px;background:#e9e9e9;"></div>
<span class="t g" style="left:-0.6px;top:917.4px;height:14px;line-height:14px;font-size:9.72px;color:#2525c4;transform:scaleX(0.9804);transform-origin:0 50%;">1841</span>
<span class="t g" style="left:24.4px;top:917.4px;height:14px;line-height:14px;font-size:9.72px;color:#111;">3dRmTag [1394927]</span>
<span class="t g" style="left:328.4px;top:917.4px;height:14px;line-height:14px;font-size:9.72px;color:#111;">[11] WCC_Wall SS1-m2</span>
<span class="t g" style="left:661.0px;top:917.4px;height:14px;line-height:14px;font-size:9.72px;color:#111;">Gib-board Lining</span>
<div class="b" style="left:0.0px;top:941.7px;width:22.3px;height:0.8px;background:#dcdcdc;"></div>
<div class="b" style="left:22.3px;top:941.7px;width:920.7px;height:0.8px;background:#e9e9e9;"></div>
<span class="t g" style="left:-0.6px;top:929.8px;height:14px;line-height:14px;font-size:9.72px;color:#2525c4;transform:scaleX(0.9804);transform-origin:0 50%;">1842</span>
<span class="t g" style="left:24.4px;top:929.8px;height:14px;line-height:14px;font-size:9.72px;color:#111;">3dRmTag [1394927]</span>
<span class="t g" style="left:328.4px;top:929.8px;height:14px;line-height:14px;font-size:9.72px;color:#111;">[12] WCC_WallFin1</span>
<span class="t g" style="left:661.0px;top:929.8px;height:14px;line-height:14px;font-size:9.72px;color:#111;">Paint Finish</span>
<div class="b" style="left:0.0px;top:954.1px;width:22.3px;height:0.8px;background:#dcdcdc;"></div>
<div class="b" style="left:22.3px;top:954.1px;width:920.7px;height:0.8px;background:#e9e9e9;"></div>
<span class="t g" style="left:-0.6px;top:942.2px;height:14px;line-height:14px;font-size:9.72px;color:#2525c4;transform:scaleX(0.9804);transform-origin:0 50%;">1843</span>
<span class="t g" style="left:24.4px;top:942.2px;height:14px;line-height:14px;font-size:9.72px;color:#111;">3dRmTag [1394927]</span>
<span class="t g" style="left:328.4px;top:942.2px;height:14px;line-height:14px;font-size:9.72px;color:#111;">[13] + Phasing</span>
<div class="b" style="left:0.0px;top:966.5px;width:22.3px;height:0.8px;background:#dcdcdc;"></div>
<div class="b" style="left:22.3px;top:966.5px;width:920.7px;height:0.8px;background:#e9e9e9;"></div>
<span class="t g" style="left:-0.6px;top:954.6px;height:14px;line-height:14px;font-size:9.72px;color:#2525c4;transform:scaleX(0.9804);transform-origin:0 50%;">1844</span>
<span class="t g" style="left:24.4px;top:954.6px;height:14px;line-height:14px;font-size:9.72px;color:#111;">3dRmTag [1394927]</span>
<span class="t g" style="left:328.4px;top:954.6px;height:14px;line-height:14px;font-size:9.72px;color:#111;">[14] Phase Created</span>
<span class="t g" style="left:661.0px;top:954.6px;height:14px;line-height:14px;font-size:9.72px;color:#111;">Existing</span>
<div class="b" style="left:0.0px;top:978.9px;width:22.3px;height:0.8px;background:#dcdcdc;"></div>
<div class="b" style="left:22.3px;top:978.9px;width:920.7px;height:0.8px;background:#e9e9e9;"></div>
<span class="t g" style="left:-0.6px;top:967.0px;height:14px;line-height:14px;font-size:9.72px;color:#2525c4;transform:scaleX(0.9804);transform-origin:0 50%;">1845</span>
<span class="t g" style="left:24.4px;top:967.0px;height:14px;line-height:14px;font-size:9.72px;color:#111;">3dRmTag [1394927]</span>
<span class="t g" style="left:328.4px;top:967.0px;height:14px;line-height:14px;font-size:9.72px;color:#111;">[15] + Text</span>
<div class="b" style="left:0.0px;top:991.3px;width:22.3px;height:0.8px;background:#dcdcdc;"></div>
<div class="b" style="left:22.3px;top:991.3px;width:920.7px;height:0.8px;background:#e9e9e9;"></div>
<span class="t g" style="left:-0.6px;top:979.4px;height:14px;line-height:14px;font-size:9.72px;color:#2525c4;transform:scaleX(0.9804);transform-origin:0 50%;">1846</span>
<span class="t g" style="left:24.4px;top:979.4px;height:14px;line-height:14px;font-size:9.72px;color:#111;">3dRmTag [1394927]</span>
<span class="t g" style="left:328.4px;top:979.4px;height:14px;line-height:14px;font-size:9.72px;color:#111;">[16] 3dRmDept</span>
<span class="t g" style="left:661.0px;top:979.4px;height:14px;line-height:14px;font-size:9.72px;color:#111;">G-U1</span>
<div class="b" style="left:0.0px;top:1003.7px;width:22.3px;height:0.8px;background:#dcdcdc;"></div>
<div class="b" style="left:22.3px;top:1003.7px;width:920.7px;height:0.8px;background:#e9e9e9;"></div>
<span class="t g" style="left:-0.6px;top:991.8px;height:14px;line-height:14px;font-size:9.72px;color:#2525c4;transform:scaleX(0.9804);transform-origin:0 50%;">1847</span>
<span class="t g" style="left:24.4px;top:991.8px;height:14px;line-height:14px;font-size:9.72px;color:#111;">3dRmTag [1394927]</span>
<span class="t g" style="left:328.4px;top:991.8px;height:14px;line-height:14px;font-size:9.72px;color:#111;">[17] 3dRmName</span>
<span class="t g" style="left:661.0px;top:991.8px;height:14px;line-height:14px;font-size:9.72px;color:#111;">Office</span>
<span class="t g" style="left:-0.6px;top:1004.2px;height:14px;line-height:14px;font-size:9.72px;color:#2525c4;transform:scaleX(0.9804);transform-origin:0 50%;">1848</span>
<span class="t g" style="left:24.4px;top:1004.2px;height:14px;line-height:14px;font-size:9.72px;color:#111;">3dRmTag [1394927]</span>
<span class="t g" style="left:328.4px;top:1004.2px;height:14px;line-height:14px;font-size:9.72px;color:#111;">[18] 3dRmNumber</span>
<span class="t g" style="left:661.0px;top:1004.2px;height:14px;line-height:14px;font-size:9.72px;color:#111;">3</span>
<div class="b" style="left:22.0px;top:284.4px;width:305.1px;height:13.4px;border:1.2px solid #4f8f6b;box-sizing:border-box"></div>
<div class="b" style="left:324.7px;top:295.7px;width:3.1px;height:3.0px;background:#2f7a50;border:0.6px solid #fff"></div>
<div class="b" style="left:0.0px;top:1010.2px;width:943.0px;height:13.8px;background:#e6e6e6;"></div>
<svg class="b" style="left:20.0px;top:180.0px;" width="90" height="65" viewBox="20 180 90 65"><path d="M26.2 198.2H69.2V186.4L95.8 211.3L69.2 237.4V224.4H26.2Z" fill="#4f81bd" stroke="#3a6397" stroke-width="0.8"/></svg>
<span class="t g" style="left:32.5px;top:200.3px;height:12px;line-height:12px;font-size:8.30px;color:#fff;transform:scaleX(0.9325);transform-origin:0 50%;">Import CSV</span>
<div class="b" style="left:107.0px;top:191.3px;width:59.6px;height:38.0px;background:#ff0000;border:0.6px solid #d22;box-sizing:border-box"></div>
<span class="t g" style="left:112.3px;top:193.7px;height:12px;line-height:12px;font-size:8.30px;color:#9c0000;transform:scaleX(0.9670);transform-origin:0 50%;">Delete</span>
<span class="t g" style="left:112.3px;top:204.4px;height:12px;line-height:12px;font-size:8.30px;color:#9c0000;letter-spacing:0.118px;">Imported</span>
<span class="t g" style="left:112.3px;top:215.0px;height:12px;line-height:12px;font-size:8.30px;color:#9c0000;transform:scaleX(0.9525);transform-origin:0 50%;">Data</span>
<div class="b" style="left:103.0px;top:232.2px;width:65.8px;height:37.1px;background:#9bbb59;border:0.8px solid #76923c;box-sizing:border-box"></div>
<span class="t g" style="left:108.6px;top:234.6px;height:12px;line-height:12px;font-size:8.30px;color:#fff;letter-spacing:0.184px;">Off/On</span>
<span class="t g" style="left:108.6px;top:245.4px;height:12px;line-height:12px;font-size:8.30px;color:#fff;transform:scaleX(0.9705);transform-origin:0 50%;">Filter</span>
<div class="b" style="left:332.2px;top:190.4px;width:60.3px;height:52.8px;background:#7e62a5;border:0.8px solid #5f497a;box-sizing:border-box"></div>
<span class="t g" style="left:347.0px;top:195.3px;height:17px;line-height:17px;font-size:12.20px;color:#fff;letter-spacing:0.481px;">Filter</span>
<span class="t g" style="left:339.5px;top:212.8px;height:17px;line-height:17px;font-size:12.20px;color:#fff;transform:scaleX(0.9872);transform-origin:0 50%;">ROOMS</span>
<svg class="b" style="left:655.0px;top:183.0px;" width="100" height="90" viewBox="655 183 100 90"><path d="M658.4 206.2H708.8V185.9L752.4 227.8L708.8 271.2V249.7H658.4Z" fill="#5f497a"/></svg>
<span class="t g" style="left:664.8px;top:209.4px;height:12px;line-height:12px;font-size:8.30px;color:#fff;transform:scaleX(0.9321);transform-origin:0 50%;">ROOM DATA</span>
<span class="t g" style="left:664.8px;top:220.2px;height:12px;line-height:12px;font-size:8.30px;color:#d4142a;letter-spacing:0.035px;">Export to new</span>
<span class="t g" style="left:664.8px;top:230.6px;height:12px;line-height:12px;font-size:8.30px;color:#d4142a;transform:scaleX(0.9702);transform-origin:0 50%;">sheet</span>
<svg class="b" style="left:805.0px;top:183.0px;" width="112" height="90" viewBox="805 183 112 90"><path d="M809.8 208.6H872.6V188.2L913 228.6L872.6 269V249H809.8Z" fill="#ffc000" stroke="#4b5f78" stroke-width="1.1" stroke-linejoin="miter"/></svg>
<span class="t g" style="left:815.8px;top:210.6px;height:12px;line-height:12px;font-size:8.30px;color:#f03a17;transform:scaleX(0.9591);transform-origin:0 50%;">Export Selected</span>
<span class="t g" style="left:815.8px;top:221.2px;height:12px;line-height:12px;font-size:8.30px;color:#f03a17;transform:scaleX(0.9210);transform-origin:0 50%;">Sheet to NEW FILE</span>
<div class="b" style="left:314.4px;top:273.0px;width:11.6px;height:11.2px;background:#f4f4f4;border:0.7px solid #b5b5b5;box-sizing:border-box"></div>
<svg class="b" style="left:316.4px;top:275.0px;" width="9" height="8" viewBox="0 0 9 8"><path d="M2.6 1.2H8.2L6 4V7L4.9 6.2V4Z" fill="#555"/><path d="M0.6 5.2H3L1.8 6.6Z" fill="#555"/></svg>
<div class="b" style="left:646.5px;top:273.0px;width:11.6px;height:11.2px;background:#f4f4f4;border:0.7px solid #b5b5b5;box-sizing:border-box"></div>
<svg class="b" style="left:650.2px;top:277.8px;" width="4.2" height="2.6" viewBox="0 0 4.2 2.6"><path d="M0 0H4.2 L2.1 2.4 Z" fill="#555"/></svg>
<div class="b" style="left:901.1px;top:273.0px;width:11.6px;height:11.2px;background:#f4f4f4;border:0.7px solid #b5b5b5;box-sizing:border-box"></div>
<svg class="b" style="left:904.8px;top:277.8px;" width="4.2" height="2.6" viewBox="0 0 4.2 2.6"><path d="M0 0H4.2 L2.1 2.4 Z" fill="#555"/></svg>
<svg class="b" style="left:382.6px;top:232.8px;" width="135.7" height="153" viewBox="382.6 232.8 135.7 153.0"><defs><filter id="sh506" x="-20%" y="-20%" width="140%" height="140%"><feGaussianBlur stdDeviation="1.6"/></filter></defs><g transform="translate(1.2,2)" opacity="0.28" filter="url(#sh506)"><line x1="506.3" y1="373.8" x2="402.1" y2="253.5" stroke="#000" stroke-width="5.6" stroke-linecap="round"/><path d="M394.6 244.8 L411.1 251.7 L402.1 253.5 L399.0 262.1Z" fill="#000"/></g><line x1="506.3" y1="373.8" x2="402.1" y2="253.5" stroke="#ec4038" stroke-width="5.6" stroke-linecap="round"/><path d="M394.6 244.8 L411.1 251.7 L402.1 253.5 L399.0 262.1Z" fill="#ec4038" stroke="#ec4038" stroke-width="0.8" stroke-linejoin="round"/></svg>
<svg class="b" style="left:101.5px;top:457.5px;" width="181" height="90.2" viewBox="101.5 457.5 181.0 90.2"><defs><filter id="sh270" x="-20%" y="-20%" width="140%" height="140%"><feGaussianBlur stdDeviation="1.6"/></filter></defs><g transform="translate(1.2,2)" opacity="0.28" filter="url(#sh270)"><line x1="270.5" y1="469.5" x2="124.1" y2="531.2" stroke="#000" stroke-width="5.6" stroke-linecap="round"/><path d="M113.5 535.7 L125.1 522.1 L124.1 531.2 L131.4 536.9Z" fill="#000"/></g><line x1="270.5" y1="469.5" x2="124.1" y2="531.2" stroke="#ec4038" stroke-width="5.6" stroke-linecap="round"/><path d="M113.5 535.7 L125.1 522.1 L124.1 531.2 L131.4 536.9Z" fill="#ec4038" stroke="#ec4038" stroke-width="0.8" stroke-linejoin="round"/></svg>
<svg class="b" style="left:508.8px;top:371.8px;" width="47.2" height="36.4" viewBox="508.8 371.8 47.2 36.4"><defs><filter id="bs1" x="-20%" y="-20%" width="140%" height="150%"><feGaussianBlur stdDeviation="1.3"/></filter></defs><path d="M532.9 397.8 A11.2 11.2 0 1 1 532.9 380.2 L548.0 389.0 Z" fill="#000" opacity="0.25" transform="translate(0.6,1.8)" filter="url(#bs1)"/><path d="M532.9 397.8 A11.2 11.2 0 1 1 532.9 380.2 L548.0 389.0 Z" fill="#f7e13e" stroke="#d9c43a" stroke-width="0.7"/><text x="526.8" y="393.2" font-size="12" text-anchor="middle" fill="#1a1a1a">1</text></svg>
<svg class="b" style="left:243.3px;top:477.3px;" width="46.2" height="36.4" viewBox="243.3 477.3 46.2 36.4"><defs><filter id="bs2" x="-20%" y="-20%" width="140%" height="150%"><feGaussianBlur stdDeviation="1.3"/></filter></defs><path d="M267.4 503.3 A11.2 11.2 0 1 1 267.4 485.7 L281.5 494.5 Z" fill="#000" opacity="0.25" transform="translate(0.6,1.8)" filter="url(#bs2)"/><path d="M267.4 503.3 A11.2 11.2 0 1 1 267.4 485.7 L281.5 494.5 Z" fill="#f7e13e" stroke="#d9c43a" stroke-width="0.7"/><text x="261.3" y="498.7" font-size="12" text-anchor="middle" fill="#1a1a1a">2</text></svg>
<span class="t " style="left:15.0px;top:5.7px;height:15px;line-height:15px;font-size:10.60px;color:#68a082;transform:scaleX(0.8811);transform-origin:0 50%;">AutoSave</span>
<div class="b" style="left:59.5px;top:7.3px;width:30.5px;height:11.6px;border:1px solid #68a082;border-radius:7px;box-sizing:border-box"></div>
<div class="b" style="left:63.0px;top:10.6px;width:5.0px;height:5.0px;background:#68a082;border-radius:50%"></div>
<span class="t " style="left:73.2px;top:7.2px;height:12px;line-height:12px;font-size:8.60px;color:#68a082;letter-spacing:0.329px;">Off</span>
<svg class="b" style="left:103.0px;top:7.0px;" width="12" height="12" viewBox="0 0 12 12"><path d="M0.8 0.8H9.4L11.2 2.6V11.2H0.8Z" fill="none" stroke="#fff" stroke-width="1.3"/><rect x="3" y="0.8" width="5.6" height="3.6" fill="#fff"/><rect x="3" y="7" width="6" height="4.2" fill="#fff"/><rect x="4.3" y="8.2" width="1.4" height="2.2" fill="#217346"/></svg>
<svg class="b" style="left:125.5px;top:7.5px;" width="12" height="11" viewBox="0 0 12 11"><path d="M1 4.6H7.2A3.4 3.4 0 0 1 7.2 10.4H5.5" fill="none" stroke="#68a082" stroke-width="1.4"/><path d="M4.2 1L0.6 4.6L4.2 8.2" fill="none" stroke="#68a082" stroke-width="1.4"/></svg>
<svg class="b" style="left:143.0px;top:12.8px;" width="4" height="2.5" viewBox="0 0 4 2.5"><path d="M0 0H4 L2 2.3 Z" fill="#68a082"/></svg>
<svg class="b" style="left:154.5px;top:7.5px;" width="12" height="11" viewBox="0 0 12 11"><path d="M11 4.6H4.8A3.4 3.4 0 0 0 4.8 10.4H6.5" fill="none" stroke="#68a082" stroke-width="1.4"/><path d="M7.8 1L11.4 4.6L7.8 8.2" fill="none" stroke="#68a082" stroke-width="1.4"/></svg>
<svg class="b" style="left:172.0px;top:12.8px;" width="4" height="2.5" viewBox="0 0 4 2.5"><path d="M0 0H4 L2 2.3 Z" fill="#68a082"/></svg>
<svg class="b" style="left:182.0px;top:5.5px;" width="12" height="15" viewBox="0 0 12 15"><circle cx="6" cy="3" r="2.6" fill="none" stroke="#fff" stroke-width="1"/><path d="M4.8 2.6V9L3 8.2L2.2 9.4L5 13.6H9.8L10.6 8.6L7.2 7.2V2.6A1.2 1.2 0 0 0 4.8 2.6Z" fill="#fff"/></svg>
<svg class="b" style="left:198.3px;top:12.8px;" width="4" height="2.5" viewBox="0 0 4 2.5"><path d="M0 0H4 L2 2.3 Z" fill="#fff"/></svg>
<div class="b" style="left:205.5px;top:0.0px;width:22.7px;height:25.4px;background:#185c37;"></div>
<svg class="b" style="left:210.5px;top:6.3px;" width="12" height="13.5" viewBox="0 0 12 13.5"><path d="M0.3 0.6H11.7L7.2 6.2V11.4L4.8 13.2V6.2Z" fill="#fff"/></svg>
<svg class="b" style="left:237.6px;top:10.2px;" width="5" height="7" viewBox="0 0 5 7"><rect x="0" y="0" width="5" height="1.1" fill="#fff"/><path d="M0 2.8H5L2.5 5.6Z" fill="#fff"/></svg>
<span class="t " style="left:702.0px;top:5.2px;height:15px;line-height:15px;font-size:10.80px;color:#fff;transform:scaleX(0.8929);transform-origin:0 50%;">Import3DPdRoomDemo-2  -  Read-Only  -  Excel</span>
<div class="b" style="left:48.5px;top:27.0px;width:41.5px;height:25.5px;background:#f3f3f3;"></div>
<span class="t " style="left:14.0px;top:33.0px;height:15px;line-height:15px;font-size:10.80px;color:#fff;transform:scaleX(0.7757);transform-origin:0 50%;">File</span>
<span class="t " style="left:55.5px;top:33.0px;height:15px;line-height:15px;font-size:10.80px;color:#217346;transform:scaleX(0.9407);transform-origin:0 50%;">Home</span>
<span class="t " style="left:98.0px;top:33.0px;height:15px;line-height:15px;font-size:10.80px;color:#fff;transform:scaleX(0.8737);transform-origin:0 50%;">Insert</span>
<span class="t " style="left:138.0px;top:33.0px;height:15px;line-height:15px;font-size:10.80px;color:#fff;transform:scaleX(0.8729);transform-origin:0 50%;">Draw</span>
<span class="t " style="left:176.0px;top:33.0px;height:15px;line-height:15px;font-size:10.80px;color:#fff;transform:scaleX(0.8574);transform-origin:0 50%;">Page Layout</span>
<span class="t " style="left:244.0px;top:33.0px;height:15px;line-height:15px;font-size:10.80px;color:#fff;transform:scaleX(0.8665);transform-origin:0 50%;">Formulas</span>
<span class="t " style="left:299.5px;top:33.0px;height:15px;line-height:15px;font-size:10.80px;color:#fff;transform:scaleX(0.8548);transform-origin:0 50%;">Data</span>
<span class="t " style="left:335.5px;top:33.0px;height:15px;line-height:15px;font-size:10.80px;color:#fff;transform:scaleX(0.8048);transform-origin:0 50%;">Review</span>
<span class="t " style="left:380.5px;top:33.0px;height:15px;line-height:15px;font-size:10.80px;color:#fff;transform:scaleX(0.8400);transform-origin:0 50%;">View</span>
<span class="t " style="left:417.0px;top:33.0px;height:15px;line-height:15px;font-size:10.80px;color:#fff;transform:scaleX(0.8836);transform-origin:0 50%;">Developer</span>
<span class="t " style="left:477.0px;top:33.0px;height:15px;line-height:15px;font-size:10.80px;color:#fff;transform:scaleX(0.9284);transform-origin:0 50%;">Add-ins</span>
<span class="t " style="left:527.5px;top:33.0px;height:15px;line-height:15px;font-size:10.80px;color:#fff;transform:scaleX(0.8779);transform-origin:0 50%;">Help</span>
<span class="t " style="left:563.5px;top:33.0px;height:15px;line-height:15px;font-size:10.40px;color:#fff;transform:scaleX(0.8127);transform-origin:0 50%;">OFFICE REMOTE</span>
<span class="t " style="left:649.0px;top:33.0px;height:15px;line-height:15px;font-size:10.80px;color:#fff;transform:scaleX(0.8141);transform-origin:0 50%;">Team</span>
<span class="t " style="left:701.0px;top:33.0px;height:15px;line-height:15px;font-size:10.80px;color:#dbe9e1;transform:scaleX(0.9154);transform-origin:0 50%;">Tell me what you want to do</span>
<svg class="b" style="left:687.0px;top:33.2px;" width="9" height="14" viewBox="0 0 9 14"><path d="M4.5 0.7A3.7 3.7 0 0 1 6.6 7.4V9.4H2.4V7.4A3.7 3.7 0 0 1 4.5 0.7Z" fill="none" stroke="#fff" stroke-width="0.9"/><path d="M2.8 10.8H6.2M3.3 12.3H5.7" stroke="#fff" stroke-width="0.9"/></svg>
<svg class="b" style="left:5.0px;top:55.6px;" width="24" height="26" viewBox="0 0 24 26"><rect x="1.2" y="3.6" width="17.4" height="20" rx="1" fill="#e9c07b"/><rect x="5.6" y="1.6" width="8.6" height="3.8" rx="0.6" fill="#6a6a6a"/><rect x="8" y="0.5" width="3.8" height="2.4" rx="1" fill="none" stroke="#6a6a6a" stroke-width="0.8"/><path d="M11.6 10.4H19.4L22.8 13.8V24.8H11.6Z" fill="#fff" stroke="#8f8f8f" stroke-width="0.8"/><path d="M19.4 10.4V13.8H22.8" fill="none" stroke="#8f8f8f" stroke-width="0.8"/></svg>
<span class="t " style="left:4.0px;top:82.3px;height:15px;line-height:15px;font-size:10.80px;color:#444;transform:scaleX(0.8038);transform-origin:0 50%;">Paste</span>
<svg class="b" style="left:13.2px;top:100.4px;" width="4" height="2.5" viewBox="0 0 4 2.5"><path d="M0 0H4 L2 2.3 Z" fill="#666"/></svg>
<svg class="b" style="left:32.5px;top:56.5px;" width="11" height="12.5" viewBox="0 0 11 12.5"><path d="M2.4 0.6L7.6 8.2M8.6 0.6L3.4 8.2" stroke="#555" stroke-width="1"/><circle cx="2.6" cy="10" r="1.9" fill="none" stroke="#3c78c3" stroke-width="1"/><circle cx="8.4" cy="10" r="1.9" fill="none" stroke="#3c78c3" stroke-width="1"/></svg>
<span class="t " style="left:47.0px;top:55.8px;height:15px;line-height:15px;font-size:10.80px;color:#444;transform:scaleX(0.8330);transform-origin:0 50%;">Cut</span>
<svg class="b" style="left:32.8px;top:73.8px;" width="11" height="13" viewBox="0 0 11 13"><path d="M0.6 0.6H5L6.6 2.2V8.6H0.6Z" fill="#fff" stroke="#777" stroke-width="0.8"/><path d="M4 4H8.4L10.2 5.8V12.4H4Z" fill="#fff" stroke="#777" stroke-width="0.8"/><path d="M5.4 7.4H8.8M5.4 9H8.8M5.4 10.6H8.8" stroke="#5b9bd5" stroke-width="0.7"/></svg>
<span class="t " style="left:47.0px;top:73.6px;height:15px;line-height:15px;font-size:10.80px;color:#444;transform:scaleX(0.8726);transform-origin:0 50%;">Copy</span>
<svg class="b" style="left:75.4px;top:80.0px;" width="4" height="2.5" viewBox="0 0 4 2.5"><path d="M0 0H4 L2 2.3 Z" fill="#666"/></svg>
<svg class="b" style="left:32.5px;top:92.5px;" width="13" height="12" viewBox="0 0 13 12"><path d="M7.2 4.8L9 6.6L4.2 11.4H1.2V8.6Z" fill="#e8bf7a" stroke="#c79a4c" stroke-width="0.5"/><path d="M7.6 3.4L10.6 0.6L12.4 2.4L9.6 5.4L10.4 6.2L9.4 7.2L5.8 3.6L6.8 2.6Z" fill="#555"/></svg>
<span class="t " style="left:47.0px;top:91.6px;height:15px;line-height:15px;font-size:10.80px;color:#444;transform:scaleX(0.8680);transform-origin:0 50%;">Format Painter</span>
<span class="t " style="left:31.0px;top:109.9px;height:14px;line-height:14px;font-size:10.00px;color:#555;transform:scaleX(0.8644);transform-origin:0 50%;">Clipboard</span>
<svg class="b" style="left:105.0px;top:113.2px;" width="6" height="6" viewBox="0 0 6 6"><path d="M0.4 5V0.4H5" fill="none" stroke="#777" stroke-width="0.8"/><path d="M2.2 2.2L5 5M5 2.6V5H2.6" fill="none" stroke="#777" stroke-width="0.8"/></svg>
<div class="b" style="left:114.1px;top:56.0px;width:0.8px;height:62.0px;background:#e0e0e0;"></div>
<div class="b" style="left:118.0px;top:60.0px;width:73.5px;height:16.6px;background:#fff;border:0.7px solid #dedede;box-sizing:border-box"></div>
<div class="b" style="left:192.0px;top:60.0px;width:34.0px;height:16.6px;background:#fff;border:0.7px solid #dedede;box-sizing:border-box"></div>
<span class="t " style="left:120.6px;top:61.6px;height:15px;line-height:15px;font-size:10.80px;color:#444;transform:scaleX(0.8747);transform-origin:0 50%;">Arial</span>
<svg class="b" style="left:184.6px;top:67.4px;" width="4" height="2.5" viewBox="0 0 4 2.5"><path d="M0 0H4 L2 2.3 Z" fill="#555"/></svg>
<span class="t " style="left:195.0px;top:61.6px;height:15px;line-height:15px;font-size:10.80px;color:#444;transform:scaleX(0.8740);transform-origin:0 50%;">12</span>
<svg class="b" style="left:219.0px;top:67.4px;" width="4" height="2.5" viewBox="0 0 4 2.5"><path d="M0 0H4 L2 2.3 Z" fill="#555"/></svg>
<span class="t " style="left:228.8px;top:60.0px;height:19px;line-height:19px;font-size:13.40px;color:#444;letter-spacing:0.662px;">A</span>
<svg class="b" style="left:238.3px;top:62.0px;" width="4" height="3" viewBox="0 0 4 3"><path d="M0 2.8L2 0L4 2.8Z" fill="#3c78c3"/></svg>
<span class="t " style="left:245.8px;top:62.6px;height:15px;line-height:15px;font-size:11.00px;color:#444;letter-spacing:0.263px;">A</span>
<svg class="b" style="left:253.2px;top:62.4px;" width="3.6" height="2.6" viewBox="0 0 3.6 2.6"><path d="M0 0H3.6L1.8 2.6Z" fill="#3c78c3"/></svg>
<span class="t " style="left:121.2px;top:84.1px;height:16px;line-height:16px;font-size:11.60px;color:#333;transform:scaleX(0.9788);transform-origin:0 50%;font-weight:bold;">B</span>
<span class="t " style="left:139.0px;top:84.1px;height:16px;line-height:16px;font-size:11.60px;color:#333;font-weight:bold;font-style:italic;font-family:'Liberation Serif',serif;font-size:12.4px;">I</span>
<span class="t " style="left:153.3px;top:83.7px;height:16px;line-height:16px;font-size:11.40px;color:#333;transform:scaleX(0.9717);transform-origin:0 50%;">U</span>
<div class="b" style="left:153.2px;top:97.2px;width:8.1px;height:1.0px;background:#333;"></div>
<svg class="b" style="left:168.2px;top:91.2px;" width="4" height="2.5" viewBox="0 0 4 2.5"><path d="M0 0H4 L2 2.3 Z" fill="#666"/></svg>
<div class="b" style="left:176.5px;top:84.0px;width:0.7px;height:16.0px;background:#e2e2e2;"></div>
<svg class="b" style="left:181.6px;top:85.6px;" width="12.4" height="12.4" viewBox="0 0 12.4 12.4"><rect x="0.5" y="0.5" width="11.4" height="11.4" fill="#fff" stroke="#8c8c8c" stroke-width="0.8"/><path d="M6.2 0.5V11.9M0.5 6.2H11.9" stroke="#b5b5b5" stroke-width="0.8"/></svg>
<svg class="b" style="left:198.2px;top:91.2px;" width="4" height="2.5" viewBox="0 0 4 2.5"><path d="M0 0H4 L2 2.3 Z" fill="#666"/></svg>
<div class="b" style="left:206.6px;top:84.0px;width:0.7px;height:16.0px;background:#e2e2e2;"></div>
<svg class="b" style="left:211.5px;top:83.8px;" width="13.5" height="15" viewBox="0 0 13.5 15"><path d="M3.6 4.6L7.2 1L11.4 5.4L7.4 9.4Q6.4 10.2 5.4 9.4L2.8 6.8Q2.2 5.8 3.6 4.6Z" fill="#fff" stroke="#666" stroke-width="0.9"/><path d="M5 0.6Q7.4 -0.4 7.6 2.6" fill="none" stroke="#666" stroke-width="0.8"/><path d="M11.6 6.4Q13.2 8.8 12.2 9.8Q11 10.4 10.6 9.2Q10.6 8 11.6 6.4Z" fill="#3c78c3"/><rect x="0.6" y="11.4" width="12" height="3.2" fill="#ffef00"/></svg>
<svg class="b" style="left:228.2px;top:91.2px;" width="4" height="2.5" viewBox="0 0 4 2.5"><path d="M0 0H4 L2 2.3 Z" fill="#666"/></svg>
<span class="t " style="left:238.2px;top:82.2px;height:17px;line-height:17px;font-size:12.00px;color:#333;letter-spacing:0.396px;">A</span>
<div class="b" style="left:236.6px;top:95.8px;width:12.4px;height:3.2px;background:#e8112d;"></div>
<svg class="b" style="left:252.3px;top:91.2px;" width="4" height="2.5" viewBox="0 0 4 2.5"><path d="M0 0H4 L2 2.3 Z" fill="#666"/></svg>
<span class="t " style="left:173.0px;top:109.9px;height:14px;line-height:14px;font-size:10.00px;color:#555;transform:scaleX(0.8596);transform-origin:0 50%;">Font</span>
<svg class="b" style="left:251.3px;top:113.2px;" width="6" height="6" viewBox="0 0 6 6"><path d="M0.4 5V0.4H5" fill="none" stroke="#777" stroke-width="0.8"/><path d="M2.2 2.2L5 5M5 2.6V5H2.6" fill="none" stroke="#777" stroke-width="0.8"/></svg>
<div class="b" style="left:260.6px;top:56.0px;width:0.8px;height:62.0px;background:#e0e0e0;"></div>
<svg class="b" style="left:266.0px;top:61.4px;" width="11" height="8.8" viewBox="0 0 11 8.8"><rect x="0.00" y="0.00" width="11.00" height="0.90" fill="#777"/><rect x="1.70" y="2.60" width="7.60" height="0.90" fill="#777"/><rect x="0.00" y="5.20" width="11.00" height="0.90" fill="#777"/></svg>
<svg class="b" style="left:282.0px;top:64.8px;" width="11" height="8.8" viewBox="0 0 11 8.8"><rect x="0.00" y="0.00" width="11.00" height="0.90" fill="#777"/><rect x="1.70" y="2.60" width="7.60" height="0.90" fill="#777"/><rect x="0.00" y="5.20" width="11.00" height="0.90" fill="#777"/></svg>
<div class="b" style="left:296.0px;top:60.0px;width:16.2px;height:16.6px;background:#c8c8c8;"></div>
<svg class="b" style="left:298.6px;top:68.0px;" width="11" height="8.8" viewBox="0 0 11 8.8"><rect x="0.00" y="0.00" width="11.00" height="0.90" fill="#666"/><rect x="1.70" y="2.60" width="7.60" height="0.90" fill="#666"/><rect x="0.00" y="5.20" width="11.00" height="0.90" fill="#666"/></svg>
<svg class="b" style="left:320.0px;top:61.0px;" width="13" height="14" viewBox="0 0 13 14"><text x="0" y="0" font-size="7.6" fill="#555" transform="translate(1.9,9.9) rotate(-45)">ab</text><path d="M5.2 12.1L11.4 6.2M8.6 5.9L11.7 5.9L11.7 9" fill="none" stroke="#666" stroke-width="1"/></svg>
<svg class="b" style="left:335.4px;top:67.6px;" width="4" height="2.5" viewBox="0 0 4 2.5"><path d="M0 0H4 L2 2.3 Z" fill="#666"/></svg>
<svg class="b" style="left:266.0px;top:85.8px;" width="11" height="13.5" viewBox="0 0 11 13.5"><rect x="0.00" y="0.00" width="11.00" height="0.90" fill="#777"/><rect x="0.00" y="2.50" width="8.00" height="0.90" fill="#777"/><rect x="0.00" y="5.00" width="11.00" height="0.90" fill="#777"/><rect x="0.00" y="7.50" width="8.00" height="0.90" fill="#777"/><rect x="0.00" y="10.00" width="11.00" height="0.90" fill="#777"/></svg>
<svg class="b" style="left:282.0px;top:85.8px;" width="11" height="13.5" viewBox="0 0 11 13.5"><rect x="0.00" y="0.00" width="11.00" height="0.90" fill="#777"/><rect x="2.00" y="2.50" width="7.00" height="0.90" fill="#777"/><rect x="0.00" y="5.00" width="11.00" height="0.90" fill="#777"/><rect x="2.00" y="7.50" width="7.00" height="0.90" fill="#777"/><rect x="0.00" y="10.00" width="11.00" height="0.90" fill="#777"/></svg>
<svg class="b" style="left:298.0px;top:85.8px;" width="11" height="13.5" viewBox="0 0 11 13.5"><rect x="0.00" y="0.00" width="11.00" height="0.90" fill="#777"/><rect x="3.00" y="2.50" width="8.00" height="0.90" fill="#777"/><rect x="0.00" y="5.00" width="11.00" height="0.90" fill="#777"/><rect x="3.00" y="7.50" width="8.00" height="0.90" fill="#777"/><rect x="0.00" y="10.00" width="11.00" height="0.90" fill="#777"/></svg>
<svg class="b" style="left:319.6px;top:85.8px;" width="13" height="12" viewBox="0 0 13 12"><rect x="0.0" y="0.00" width="12.6" height="0.9" fill="#777"/><rect x="6.4" y="2.50" width="6.2" height="0.9" fill="#777"/><rect x="6.4" y="5.00" width="6.2" height="0.9" fill="#777"/><rect x="6.4" y="7.50" width="6.2" height="0.9" fill="#777"/><rect x="0.0" y="10.00" width="12.6" height="0.9" fill="#777"/><path d="M5 5.4H0.8M2.6 3.2L0.4 5.4L2.6 7.6" fill="none" stroke="#3c78c3" stroke-width="1.5"/></svg>
<svg class="b" style="left:335.8px;top:85.8px;" width="13" height="12" viewBox="0 0 13 12"><rect x="0.0" y="0.00" width="12.6" height="0.9" fill="#777"/><rect x="6.4" y="2.50" width="6.2" height="0.9" fill="#777"/><rect x="6.4" y="5.00" width="6.2" height="0.9" fill="#777"/><rect x="6.4" y="7.50" width="6.2" height="0.9" fill="#777"/><rect x="0.0" y="10.00" width="12.6" height="0.9" fill="#777"/><path d="M0.2 5.4H4.4M2.6 3.2L4.8 5.4L2.6 7.6" fill="none" stroke="#3c78c3" stroke-width="1.5"/></svg>
<div class="b" style="left:352.4px;top:56.0px;width:0.7px;height:46.0px;background:#e0e0e0;"></div>
<svg class="b" style="left:357.6px;top:61.8px;" width="14" height="13.4" viewBox="0 0 14 13.4"><path d="M0.5 12.6V0.5H8.6V3.2" fill="none" stroke="#777" stroke-width="0.9"/><path d="M0.5 8.4H8.6V12.6H0.5" fill="none" stroke="#777" stroke-width="0.9"/><path d="M2.2 2.6H6.4M2.2 4.6H11.2Q13 5.6 11.2 6.6H9.6M2.2 6.6H6.4M2.2 10.4H6.6" fill="none" stroke="#3c78c3" stroke-width="0.9"/><path d="M10.6 5.2L9.2 6.6L10.6 8" fill="none" stroke="#3c78c3" stroke-width="0.9"/><path d="M11.2 0.6V3.4" stroke="#3c78c3" stroke-width="0.9"/></svg>
<span class="t " style="left:372.5px;top:61.6px;height:15px;line-height:15px;font-size:10.80px;color:#444;transform:scaleX(0.8814);transform-origin:0 50%;">Wrap Text</span>
<svg class="b" style="left:357.4px;top:85.6px;" width="14" height="12.6" viewBox="0 0 14 12.6"><rect x="0.5" y="0.5" width="13" height="11.6" fill="#fff" stroke="#777" stroke-width="0.8"/><path d="M0.5 3.6H13.5M0.5 9H13.5M4.8 0.5V3.6M9.2 0.5V3.6M4.8 9V12.1M9.2 9V12.1" stroke="#999" stroke-width="0.7"/><path d="M2.4 6.3H11.6M4 4.9L2.4 6.3L4 7.7M10 4.9L11.6 6.3L10 7.7" fill="none" stroke="#3c78c3" stroke-width="0.9"/></svg>
<span class="t " style="left:372.5px;top:85.6px;height:15px;line-height:15px;font-size:10.80px;color:#444;transform:scaleX(0.8854);transform-origin:0 50%;">Merge &amp; Center</span>
<svg class="b" style="left:445.5px;top:91.6px;" width="4" height="2.5" viewBox="0 0 4 2.5"><path d="M0 0H4 L2 2.3 Z" fill="#666"/></svg>
<span class="t " style="left:331.5px;top:109.9px;height:14px;line-height:14px;font-size:10.00px;color:#555;transform:scaleX(0.8882);transform-origin:0 50%;">Alignment</span>
<svg class="b" style="left:444.5px;top:113.2px;" width="6" height="6" viewBox="0 0 6 6"><path d="M0.4 5V0.4H5" fill="none" stroke="#777" stroke-width="0.8"/><path d="M2.2 2.2L5 5M5 2.6V5H2.6" fill="none" stroke="#777" stroke-width="0.8"/></svg>
<div class="b" style="left:453.6px;top:56.0px;width:0.8px;height:62.0px;background:#e0e0e0;"></div>
<svg class="b" style="left:469.6px;top:61.2px;" width="19" height="13.95" viewBox="0 0 19 13.95"><rect x="0.00" y="0.00" width="18.80" height="0.80" fill="#9a9a9a"/><rect x="0.00" y="1.85" width="18.80" height="0.80" fill="#9a9a9a"/><rect x="0.00" y="3.70" width="18.80" height="0.80" fill="#9a9a9a"/><rect x="0.00" y="5.55" width="18.80" height="0.80" fill="#9a9a9a"/><rect x="0.00" y="7.40" width="18.80" height="0.80" fill="#9a9a9a"/><rect x="0.00" y="9.25" width="18.80" height="0.80" fill="#9a9a9a"/><rect x="0.00" y="11.10" width="18.80" height="0.80" fill="#9a9a9a"/></svg>
<span class="t " style="left:465.0px;top:82.0px;height:15px;line-height:15px;font-size:10.80px;color:#444;transform:scaleX(0.8691);transform-origin:0 50%;">Justify</span>
<span class="t " style="left:457.0px;top:109.9px;height:14px;line-height:14px;font-size:10.00px;color:#555;transform:scaleX(0.8601);transform-origin:0 50%;">New Group</span>
<div class="b" style="left:501.8px;top:56.0px;width:0.8px;height:62.0px;background:#e0e0e0;"></div>
<div class="b" style="left:504.6px;top:59.6px;width:94.8px;height:16.8px;background:#fff;border:0.7px solid #dedede;box-sizing:border-box"></div>
<span class="t " style="left:507.6px;top:61.6px;height:15px;line-height:15px;font-size:10.80px;color:#444;transform:scaleX(0.8432);transform-origin:0 50%;">General</span>
<svg class="b" style="left:592.4px;top:67.4px;" width="4" height="2.5" viewBox="0 0 4 2.5"><path d="M0 0H4 L2 2.3 Z" fill="#555"/></svg>
<span class="t " style="left:509.0px;top:83.1px;height:18px;line-height:18px;font-size:13.00px;color:#555;letter-spacing:0.370px;">$</span>
<svg class="b" style="left:522.6px;top:91.2px;" width="4" height="2.5" viewBox="0 0 4 2.5"><path d="M0 0H4 L2 2.3 Z" fill="#666"/></svg>
<span class="t " style="left:531.2px;top:83.6px;height:17px;line-height:17px;font-size:12.40px;color:#555;transform:scaleX(0.9977);transform-origin:0 50%;">%</span>
<span class="t " style="left:550.3px;top:69.0px;height:31px;line-height:31px;font-size:22.00px;color:#555;font-weight:bold;font-family:'Liberation Serif',serif;">,</span>
<div class="b" style="left:563.8px;top:84.0px;width:0.7px;height:16.0px;background:#e2e2e2;"></div>
<span class="t g" style="left:575.4px;top:83.7px;height:10px;line-height:10px;font-size:6.80px;color:#444;transform:scaleX(0.9875);transform-origin:0 50%;">.0</span>
<span class="t g" style="left:570.6px;top:89.9px;height:10px;line-height:10px;font-size:6.80px;color:#444;letter-spacing:0.316px;">.00</span>
<svg class="b" style="left:569.6px;top:86.0px;" width="5" height="4.2" viewBox="0 0 5 4.2"><path d="M4.8 2.1H0.8M2.4 0.4L0.6 2.1L2.4 3.8" fill="none" stroke="#3c78c3" stroke-width="0.9"/></svg>
<span class="t g" style="left:587.2px;top:83.7px;height:10px;line-height:10px;font-size:6.80px;color:#444;letter-spacing:0.316px;">.00</span>
<span class="t g" style="left:592.0px;top:89.9px;height:10px;line-height:10px;font-size:6.80px;color:#444;transform:scaleX(0.9875);transform-origin:0 50%;">.0</span>
<svg class="b" style="left:585.2px;top:92.2px;" width="5" height="4.2" viewBox="0 0 5 4.2"><path d="M0.2 2.1H4.2M2.6 0.4L4.4 2.1L2.6 3.8" fill="none" stroke="#3c78c3" stroke-width="0.9"/></svg>
<span class="t " style="left:530.0px;top:109.9px;height:14px;line-height:14px;font-size:10.00px;color:#555;transform:scaleX(0.8716);transform-origin:0 50%;">Number</span>
<svg class="b" style="left:592.0px;top:113.2px;" width="6" height="6" viewBox="0 0 6 6"><path d="M0.4 5V0.4H5" fill="none" stroke="#777" stroke-width="0.8"/><path d="M2.2 2.2L5 5M5 2.6V5H2.6" fill="none" stroke="#777" stroke-width="0.8"/></svg>
<div class="b" style="left:601.6px;top:56.0px;width:0.8px;height:62.0px;background:#e0e0e0;"></div>
<svg class="b" style="left:622.0px;top:56.0px;" width="23.5" height="24.5" viewBox="0 0 23.5 24.5"><rect x="0.4" y="0.4" width="21" height="17.6" fill="#fff" stroke="#999" stroke-width="0.7"/><path d="M7.2 0.4V18M14.4 0.4V18M0.4 4.8H21.4M0.4 9.2H21.4M0.4 13.6H21.4" stroke="#bdbdbd" stroke-width="0.6"/><rect x="7.4" y="0.8" width="3.8" height="4" fill="#e0533a"/><rect x="7.4" y="5" width="6.4" height="4" fill="#4a7dc4"/><rect x="7.4" y="9.4" width="5" height="4" fill="#e0533a"/><rect x="7.4" y="13.8" width="2.6" height="4" fill="#4a7dc4"/><rect x="12.6" y="15.2" width="10.4" height="8.8" fill="#fff" stroke="#666" stroke-width="0.8"/><path d="M15 18.4H20.6M15 20.8H20.6M19.4 16.6L16.4 22.6" stroke="#444" stroke-width="0.8"/></svg>
<span class="t " style="left:608.0px;top:82.0px;height:15px;line-height:15px;font-size:10.80px;color:#444;transform:scaleX(0.9068);transform-origin:0 50%;">Conditional</span>
<span class="t " style="left:605.6px;top:94.6px;height:15px;line-height:15px;font-size:10.80px;color:#444;transform:scaleX(0.8989);transform-origin:0 50%;">Formatting</span>
<svg class="b" style="left:656.0px;top:101.2px;" width="4" height="2.5" viewBox="0 0 4 2.5"><path d="M0 0H4 L2 2.3 Z" fill="#666"/></svg>
<svg class="b" style="left:673.0px;top:57.5px;" width="26" height="24" viewBox="0 0 26 24"><rect x="0.4" y="0.9" width="22" height="16.8" fill="#fff" stroke="#9a9a9a" stroke-width="0.7"/><rect x="5.8" y="5" width="16.4" height="12.4" fill="#bdd0ea"/><path d="M5.8 0.9V17.7M11.3 0.9V17.7M16.8 0.9V17.7M0.4 5H22.4M0.4 9.2H22.4M0.4 13.4H22.4" stroke="#a9b7cc" stroke-width="0.6"/><path d="M23.8 6.9L16.7 15" stroke="#6e6e6e" stroke-width="2.6" stroke-linecap="round"/><path d="M16.9 14.6L15.3 16.6" stroke="#e6e6e6" stroke-width="2.2"/><path d="M11.2 18.6L14.6 16.8L16.4 19.4L15 22.9H7Q8.6 20 11.2 18.6Z" fill="#3a73c0"/></svg>
<span class="t " style="left:662.6px;top:82.0px;height:15px;line-height:15px;font-size:10.80px;color:#444;transform:scaleX(0.8640);transform-origin:0 50%;">Format as</span>
<span class="t " style="left:669.6px;top:94.6px;height:15px;line-height:15px;font-size:10.80px;color:#444;transform:scaleX(0.8366);transform-origin:0 50%;">Table</span>
<svg class="b" style="left:694.2px;top:101.2px;" width="4" height="2.5" viewBox="0 0 4 2.5"><path d="M0 0H4 L2 2.3 Z" fill="#666"/></svg>
<div class="b" style="left:707.6px;top:53.8px;width:235.4px;height:50.6px;background:#fff;border-left:0.8px solid #c9c9c9;border-bottom:0.8px solid #d4d4d4;border-top:0.8px solid #dcdcdc"></div>
<div class="b" style="left:709.4px;top:57.4px;width:84px;height:21px;border:2.2px solid #c4c4c4;box-sizing:border-box;background:#fff"></div>
<span class="t " style="left:714.2px;top:60.2px;height:17px;line-height:17px;font-size:12.40px;color:#000;letter-spacing:0.140px;">Normal</span>
<div class="b" style="left:797.0px;top:59.2px;width:81.0px;height:17.6px;background:#ffc7ce;"></div>
<span class="t " style="left:800.6px;top:60.2px;height:17px;line-height:17px;font-size:12.40px;color:#9c0006;letter-spacing:0.112px;">Bad</span>
<div class="b" style="left:883.0px;top:59.2px;width:60.0px;height:17.6px;background:#c6efce;"></div>
<span class="t " style="left:886.6px;top:61.6px;height:15px;line-height:15px;font-size:11.00px;color:#006100;transform:scaleX(0.9811);transform-origin:0 50%;">Good</span>
<div class="b" style="left:711px;top:82.6px;width:80.6px;height:17.2px;border:1.6px solid #6a6a6a;box-sizing:border-box;background:#a5a5a5"></div>
<span class="t " style="left:714.0px;top:84.2px;height:15px;line-height:15px;font-size:10.80px;color:#fff;transform:scaleX(0.9054);transform-origin:0 50%;font-weight:bold;">Check Cell</span>
<span class="t " style="left:800.4px;top:84.4px;height:15px;line-height:15px;font-size:10.60px;color:#7f7f7f;letter-spacing:0.056px;font-style:italic;">Explanatory ...</span>
<div class="b" style="left:883px;top:82.6px;width:62px;height:17.2px;border:0.9px solid #7f7f7f;box-sizing:border-box;background:#ffcc99"></div>
<span class="t " style="left:886.6px;top:84.4px;height:15px;line-height:15px;font-size:11.00px;color:#3f3f76;letter-spacing:0.387px;">Input</span>
<span class="t " style="left:868.0px;top:109.9px;height:14px;line-height:14px;font-size:10.00px;color:#555;transform:scaleX(0.7858);transform-origin:0 50%;">Styles</span>
<div class="b" style="left:1.2px;top:131.8px;width:103.8px;height:17.4px;background:#fff;"></div>
<span class="t " style="left:5.0px;top:133.3px;height:15px;line-height:15px;font-size:10.60px;color:#444;transform:scaleX(0.9918);transform-origin:0 50%;">A1790</span>
<svg class="b" style="left:95.6px;top:139.7px;" width="3.6" height="2.3" viewBox="0 0 3.6 2.3"><path d="M0 0H3.6 L1.8 2.1 Z" fill="#666"/></svg>
<div class="b" style="left:116.4px;top:135.8px;width:1.5px;height:1.5px;background:#9c9c9c;border-radius:50%"></div>
<div class="b" style="left:116.4px;top:138.9px;width:1.5px;height:1.5px;background:#9c9c9c;border-radius:50%"></div>
<div class="b" style="left:116.4px;top:142.1px;width:1.5px;height:1.5px;background:#9c9c9c;border-radius:50%"></div>
<div class="b" style="left:130.8px;top:131.8px;width:87.6px;height:17.4px;background:#fff;"></div>
<svg class="b" style="left:140.4px;top:136.6px;" width="8.4" height="8.4" viewBox="0 0 8.4 8.4"><path d="M0.6 0.6L7.8 7.8M7.8 0.6L0.6 7.8" stroke="#b0b0b0" stroke-width="1.4"/></svg>
<svg class="b" style="left:168.6px;top:136.4px;" width="11" height="8.6" viewBox="0 0 11 8.6"><path d="M0.6 5L3.8 8L10.4 0.6" fill="none" stroke="#b0b0b0" stroke-width="1.6"/></svg>
<span class="t " style="left:199.0px;top:132.1px;height:17px;line-height:17px;font-size:12.00px;color:#555;font-style:italic;font-family:'Liberation Serif',serif;">f</span>
<span class="t " style="left:203.0px;top:136.0px;height:12px;line-height:12px;font-size:8.40px;color:#555;font-style:italic;font-family:'Liberation Serif',serif;">x</span>
<div class="b" style="left:221.0px;top:131.8px;width:722.0px;height:33.0px;background:#fff;"></div>
<span class="t " style="left:229.6px;top:133.1px;height:15px;line-height:15px;font-size:10.40px;color:#333;letter-spacing:0.196px;">3dRmTag [1394923]</span>
<div class="b" style="left:0.0px;top:1010.2px;width:943.0px;height:13.8px;background:#e4e4e4;"></div>
<div class="b" style="left:0.0px;top:1009.8px;width:943.0px;height:0.8px;background:#cfcfcf;"></div>
<svg class="b" style="left:12.0px;top:1014.8px;" width="5" height="7" viewBox="0 0 5 7"><path d="M4.4 0.4L0.8 3.5L4.4 6.6Z" fill="#c3c3c3"/></svg>
<svg class="b" style="left:31.0px;top:1014.8px;" width="5" height="7" viewBox="0 0 5 7"><path d="M0.6 0.4L4.2 3.5L0.6 6.6Z" fill="#c3c3c3"/></svg>
<div class="b" style="left:62.6px;top:1010.6px;width:70.8px;height:14px;background:linear-gradient(#5b9ae0,#3f7fd0)"></div>
<span class="t " style="left:70.3px;top:1010.4px;height:15px;line-height:15px;font-size:10.60px;color:#0b2545;transform:scaleX(0.9907);transform-origin:0 50%;">Instructions</span>
<div class="b" style="left:134px;top:1010.4px;width:72.6px;height:14px;background:linear-gradient(#ffffff 10%,#f7a3a3 95%);border-left:0.6px solid #bbb;border-right:0.6px solid #bbb"></div>
<span class="t " style="left:141.4px;top:1010.4px;height:15px;line-height:15px;font-size:10.40px;color:#1e6e42;letter-spacing:0.105px;font-weight:bold;">MacroSheet</span>
<svg class="b" style="left:229.4px;top:1012.6px;" width="11" height="11" viewBox="0 0 11 11"><circle cx="5.5" cy="5.5" r="4.8" fill="none" stroke="#8a8a8a" stroke-width="0.8"/><path d="M5.5 2.8V8.2M2.8 5.5H8.2" stroke="#8a8a8a" stroke-width="0.9"/></svg>
</body></html>
